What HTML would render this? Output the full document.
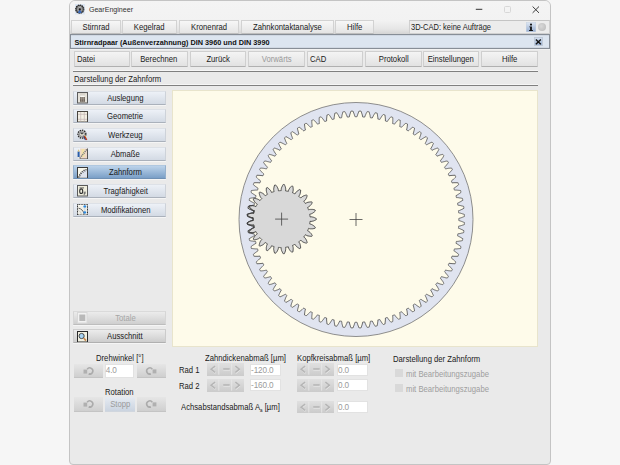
<!DOCTYPE html>
<html><head><meta charset="utf-8">
<style>
*{box-sizing:border-box;margin:0;padding:0}
html,body{width:620px;height:465px;overflow:hidden;background:#f6f6f6;font-family:"Liberation Sans",sans-serif;color:#222}
.a{position:absolute}
svg{display:block}
#win{position:absolute;left:69px;top:-0.2px;width:482px;height:464.7px;border:1px solid #c4c4c4;border-radius:6px 6px 4px 4px;background:#eaeaea;overflow:hidden}
#title{position:absolute;left:0;top:0;width:100%;height:34px;background:linear-gradient(#f4f4f4 0,#f2f2f2 20px,#e6e6e6 28px,#d0d0d0 34px)}
.tab{position:absolute;top:19.5px;height:14px;border:1px solid #d2d2d2;border-bottom-color:#bdbdbd;background:linear-gradient(#f7f7f7,#e4e4e4);font-size:8.6px;text-align:center;line-height:13.6px;color:#1a1a1a}
.btn{position:absolute;top:51px;height:15.5px;border:1px solid #cfcfcf;border-bottom-color:#b0b0b0;border-radius:1px;background:linear-gradient(#f4f4f4,#e2e2e2);font-size:8.6px;text-align:center;line-height:15.5px;color:#1a1a1a}
.btn.al{text-align:left;padding-left:2px}
.btn.dis{color:#999}
.sb{position:absolute;left:73px;width:92.5px;height:14px;border:1px solid #cdd2d9;border-top-color:#dde1e7;border-bottom-color:#aab1bb;box-shadow:0 1px 0 #f5f5f5;background:linear-gradient(#edf1f7,#d3dae4);font-size:8.6px;text-align:center;line-height:13.8px;color:#1a1a1a;padding-left:12px}
.sb.sel{background:linear-gradient(#bcd3ea,#7a9fc7);border-color:#b0c8e0 #95b0cc #6f90b4}
.ic{position:absolute;left:3.1px;top:0.4px}
.t{position:absolute;font-size:8.6px;white-space:nowrap;color:#1a1a1a;transform:scaleX(0.895);transform-origin:0 0;margin-top:-0.5px}
.t.n{transform:none;margin-top:0}
i{font-style:normal;display:inline-block;transform:scaleX(0.895)}
.al i{transform-origin:0 0}
.t.dis{color:#9e9e9e}
.t sub{font-size:5px;vertical-align:-2px}
.gb{position:absolute;width:29.3px;height:14.5px;border-bottom:1px solid #c4c4c4;background:linear-gradient(#e6e6e6,#cfcfcf);display:flex;align-items:center;justify-content:center}
.gb.stopp{background:linear-gradient(#e6ebf2,#cbd4e0);color:#9a9a9a;font-size:8.6px;border-color:#d0d6de}
.inp{position:absolute;background:#fff;border:1px solid #e2e2e2;font-size:8.2px;color:#9a9a9a;padding-left:0.1px;line-height:12.5px;padding-top:0px;letter-spacing:-0.15px}
.spin{position:absolute;width:37.2px;height:12.5px;background:linear-gradient(#e0e0e0,#cbcbcb)}
.cb{position:absolute;width:8px;height:7.5px;background:#d9d9d9}
</style></head><body>
<div id="win">
 <div id="title"></div>
</div>
<svg class="a" style="left:75px;top:4px" width="10" height="10.5"><rect width="10" height="10.5" fill="#dde6f2"/><circle cx="4.8" cy="5.2" r="4.1" fill="#5a5a5a" stroke="#262626" stroke-width="1.1" stroke-dasharray="1.3 0.8"/><circle cx="4.8" cy="5.2" r="2.7" fill="#9a9a9a"/><path d="M4.8,5.2L2.9,8.6Q4.8,9.6 6.7,8.6Z" fill="#3a6cc0"/><circle cx="4.8" cy="5.3" r="1.1" fill="#1a1a1a"/><path d="M3.4,2.3L4.8,3.4L6.2,2.3" stroke="#d0d0d0" stroke-width="0.7" fill="none"/></svg>
<div class="t n" style="left:88.9px;top:6.2px;font-size:7.1px;color:#333">GearEngineer</div>
<svg class="a" style="left:470px;top:0;" width="80" height="19">
 <path d="M5.8,9.3H12.3" stroke="#333" stroke-width="1"/>
 <rect x="34.5" y="6.5" width="6" height="6" rx="1" fill="none" stroke="#d4d4d4" stroke-width="0.9"/>
 <path d="M62.6,6.5L69,12.9M69,6.5L62.6,12.9" stroke="#333" stroke-width="0.95"/>
</svg>
<div class="tab" style="left:70.5px;width:50.5px"><i>Stirnrad</i></div><div class="tab" style="left:121.5px;width:55.5px"><i>Kegelrad</i></div><div class="tab" style="left:178.5px;width:60.5px"><i>Kronenrad</i></div><div class="tab" style="left:240.5px;width:93.0px"><i>Zahnkontaktanalyse</i></div><div class="tab" style="left:335px;width:39px"><i>Hilfe</i></div>
<div class="a" style="left:409px;top:20px;width:141px;height:14px;border:1px solid #d0d0d0;border-top-color:#c4c4c4;background:#ececec"></div>
<div class="t" style="left:411.4px;top:22.2px;font-size:8.4px">3D-CAD: keine Aufträge</div>
<svg class="a" style="left:525.5px;top:22px" width="10" height="10"><defs><linearGradient id="ig" x1="0" y1="0" x2="0" y2="1"><stop offset="0" stop-color="#e2eaf5"/><stop offset="1" stop-color="#93abcf"/></linearGradient></defs><rect x="0" y="0" width="10" height="10" fill="url(#ig)"/><rect x="0.25" y="0.25" width="9.5" height="9.5" fill="none" stroke="#c9d3e0" stroke-width="0.5"/><circle cx="5" cy="2.6" r="1.05" fill="#111"/><path d="M3.3,4.5H5.9V8.1H6.9V8.9H3.1V8.1H4.1V5.3H3.3Z" fill="#111"/></svg>
<div class="a" style="left:538px;top:22.5px;width:8px;height:8px;border-radius:4px;background:radial-gradient(circle at 40% 40%,#d8d8d8,#b8b8b8)"></div>
<div class="a" style="left:70px;top:34px;width:480px;height:15px;border:1px solid #878e97;background:#dce5f0;box-shadow:inset 0 0.6px 0 #c4ccd6,inset 0 -0.6px 0 #c4ccd6"></div><div class="a" style="left:70px;top:49px;width:480px;height:1px;background:#f2f2f2"></div>
<div class="t n" style="left:74.5px;top:37.9px;font-weight:bold;font-size:7.3px;color:#111">Stirnradpaar (Außenverzahnung) DIN 3960 und DIN 3990</div>
<div class="a" style="left:534px;top:36.5px;width:9px;height:9.5px;background:linear-gradient(#d2deee,#9ab1d2);border:0.5px solid #c0cad8"></div>
<svg class="a" style="left:534px;top:36.5px" width="10" height="10"><path d="M1.9,2.4L6.8,7.3M6.8,2.4L1.9,7.3" stroke="#141414" stroke-width="1.35"/></svg>
<div class="btn al" style="left:73.5px;width:56.5px"><i>Datei</i></div><div class="btn" style="left:131px;width:56.5px"><i>Berechnen</i></div><div class="btn" style="left:189.5px;width:56.5px"><i>Zurück</i></div><div class="btn dis" style="left:248px;width:56.5px"><i>Vorwärts</i></div><div class="btn al" style="left:306.5px;width:56.5px"><i>CAD</i></div><div class="btn" style="left:365px;width:56.5px"><i>Protokoll</i></div><div class="btn" style="left:422.5px;width:56.5px"><i>Einstellungen</i></div><div class="btn" style="left:481px;width:56.5px"><i>Hilfe</i></div>
<div class="a" style="left:73px;top:70px;width:465px;height:2px;border-top:1px solid #f6f6f6;border-bottom:1px solid #808080"></div>
<div class="t" style="left:73.5px;top:74.5px">Darstellung der Zahnform</div>
<div class="a" style="left:73px;top:84px;width:465px;height:2px;border-top:1px solid #f6f6f6;border-bottom:1px solid #808080"></div>
<div class="sb" style="top:90.7px"><svg class="ic" width="11" height="11.5"><rect x="0.5" y="0.5" width="10" height="10.5" fill="#d9d5cd" stroke="#5c5c5c"/><rect x="1.5" y="1.5" width="1" height="8.5" fill="#f4f2ea"/><rect x="8.5" y="1.5" width="1" height="8.5" fill="#f4f2ea"/><rect x="3" y="5" width="5" height="4.8" fill="#6e655c"/><rect x="3.3" y="3.6" width="4.4" height="1.6" fill="#fbfaf6"/><path d="M3.2,6.8H7.8M4.6,5.2V9.8M6.4,5.2V9.8" stroke="#b0a89e" stroke-width="0.6"/></svg><i>Auslegung</i></div><div class="sb" style="top:109.3px"><svg class="ic" width="11" height="11.5"><rect x="0.5" y="0.5" width="10" height="10.5" fill="#f3efe4" stroke="#4a4640"/><path d="M3.7,1V10.5M7.3,1V10.5M1,3.3H10M1,8.3H10" stroke="#c4b4b4" stroke-width="0.7"/></svg><i>Geometrie</i></div><div class="sb" style="top:127.9px"><svg class="ic" width="11" height="11.5"><circle cx="4.9" cy="5.2" r="4" fill="#bdbdbd" stroke="#2a2a2a" stroke-width="1.3" stroke-dasharray="1.4 0.9"/><circle cx="4.9" cy="5.2" r="2.6" fill="#8a8a8a"/><ellipse cx="4.9" cy="5.4" rx="1.9" ry="1.4" fill="#f0eee0"/><ellipse cx="4.9" cy="4.7" rx="1.2" ry="0.6" fill="#333"/><path d="M7.6,7L9.6,11" stroke="#c03818" stroke-width="1.6"/><path d="M6.6,7.5L8.4,11" stroke="#2a3e80" stroke-width="1"/><path d="M8.3,6.5L8.8,8" stroke="#d8c050" stroke-width="0.8"/></svg><i>Werkzeug</i></div><div class="sb" style="top:146.5px"><svg class="ic" width="11" height="11.5"><rect x="3" y="0.5" width="7.5" height="10.5" fill="#efd8c8"/><path d="M4.5,1H7.5V9H4.5Z" fill="#f2e4a0" opacity="0.8"/><path d="M10.5,0.5V11H2.5" fill="none" stroke="#444" stroke-width="0.9"/><path d="M2.8,10.2L10,1.2" stroke="#3a3a3a" stroke-width="1.3" stroke-dasharray="1.2 0.8"/><path d="M2.8,10.2L10,1.2" stroke="#eee" stroke-width="0.5"/><rect x="0.6" y="3.5" width="2" height="5.5" fill="#2a5ca8"/><path d="M0.6,3.5L1.6,1.2L2.6,3.5Z" fill="#d8c070"/><path d="M0.6,9.2L1.6,10.8L2.6,9.2Z" fill="#f4f0e0"/></svg><i>Abmaße</i></div><div class="sb sel" style="top:165.3px"><svg class="ic" width="11" height="11.5"><rect x="0.5" y="0.5" width="10" height="10.5" fill="#f8f7ec" stroke="#3a3a3a"/><path d="M1.8,10.5C2.6,6.5 5.5,3.2 10,2.6V10.5Z" fill="#dde2ec"/><path d="M1.8,10.5C2.6,6.5 5.5,3.2 10,2.6" fill="none" stroke="#505050" stroke-width="1.3" stroke-dasharray="1.3 0.8"/><path d="M2.6,8.2L3.6,8.8M4,6.2L5,7M5.6,4.6L6.4,5.6M7.4,3.6L8,4.6" stroke="#555" stroke-width="0.9"/></svg><i>Zahnform</i></div><div class="sb" style="top:183.9px"><svg class="ic" width="11" height="11.5"><rect x="0.5" y="0.5" width="10" height="10.5" fill="#efeede" stroke="#5a5a5a"/><path d="M2.5,2.9H7" stroke="#444" stroke-width="0.8"/><ellipse cx="4.2" cy="6.2" rx="1.5" ry="2.3" fill="none" stroke="#333" stroke-width="1.1"/><path d="M6.8,7.2H9M7.2,7.2V10.2M7.2,8.6H8.6" stroke="#555" stroke-width="0.8"/></svg><i>Tragfähigkeit</i></div><div class="sb" style="top:202.5px"><svg class="ic" width="11" height="11.5"><rect x="0.5" y="0.5" width="10" height="10.5" fill="#efeee6" stroke="#222" stroke-dasharray="1 0.6"/><path d="M1.2,1.5H9" stroke="#fbfaf2" stroke-width="1.4"/><path d="M1.5,4.2C4,4.6 6.5,6.5 7.3,10.5" fill="none" stroke="#5a5a5a" stroke-width="0.9"/><path d="M1.5,6.5C3,7 4,8.5 4.5,10.5" fill="none" stroke="#999" stroke-width="0.6" stroke-dasharray="0.8 0.6"/><ellipse cx="7.8" cy="2.4" rx="1.4" ry="1.2" fill="#2b88e0"/><ellipse cx="7.8" cy="8.4" rx="1.4" ry="1.2" fill="#2b88e0"/><path d="M7.8,3.4V7.4" stroke="#4a90d8" stroke-width="0.5" stroke-dasharray="0.6 0.5"/></svg><i>Modifikationen</i></div>
<div class="sb" style="top:310.5px;color:#a6a6a6;background:linear-gradient(#ececec,#cfcfcf);border-color:#dadada #d6d6d6 #bdbdbd"><svg class="ic" width="11" height="11.5" style="top:0.8px"><rect x="0.5" y="0.5" width="9.5" height="10.5" fill="#f2f2f2" stroke="#d8d8d8"/><rect x="2.3" y="2.5" width="6" height="6.5" fill="#b9b9b9"/></svg><i>Totale</i></div>
<div class="sb" style="top:329px;background:linear-gradient(#ececec,#cdcdcd);border-color:#cfcfcf #cbcbcb #b0b0b0"><svg class="ic" width="11" height="11.5" style="top:0.8px"><rect x="0.5" y="0.5" width="10" height="10.5" fill="#f2f1e2" stroke="#2a2a2a"/><circle cx="4.6" cy="5" r="2.6" fill="#a8d4f4" stroke="#3a3a3a" stroke-width="0.9"/><path d="M6.6,7L9,9.6" stroke="#c88a50" stroke-width="1.7"/></svg><i>Ausschnitt</i></div>
<svg class="a" style="left:172px;top:90px" width="366" height="257">
 <rect x="0.5" y="0.5" width="365" height="256" fill="#fefbea" stroke="#e8e4cc"/>
 <defs><clipPath id="mc"><ellipse cx="78" cy="129.5" rx="8" ry="15.5"/></clipPath></defs>
 <path d="M67.00,129.50A117.0,117.0 0 1 0 301.00,129.50A117.0,117.0 0 1 0 67.00,129.50ZM286.8,129.5L286.8,129.7L286.8,129.8L286.8,130.0L286.8,130.2L286.8,130.3L286.8,130.5L287.7,130.8L288.7,131.1L289.6,131.4L290.6,131.8L291.5,132.2L292.5,132.6L292.4,132.9L292.4,133.2L292.4,133.6L292.4,133.9L292.4,134.2L292.4,134.5L291.4,134.9L290.4,135.2L289.5,135.5L288.5,135.8L287.5,136.0L286.6,136.2L286.6,136.4L286.6,136.5L286.5,136.7L286.5,136.9L286.5,137.0L286.5,137.2L286.5,137.3L286.5,137.5L286.5,137.7L286.5,137.8L286.4,138.0L286.4,138.2L287.4,138.5L288.3,138.9L289.2,139.3L290.1,139.7L291.0,140.2L291.9,140.7L291.9,141.0L291.9,141.3L291.8,141.6L291.8,142.0L291.7,142.3L291.7,142.6L290.7,142.9L289.7,143.1L288.7,143.4L287.8,143.6L286.8,143.7L285.8,143.9L285.8,144.0L285.7,144.2L285.7,144.3L285.7,144.5L285.7,144.7L285.7,144.8L285.6,145.0L285.6,145.1L285.6,145.3L285.6,145.5L285.5,145.6L285.5,145.8L286.4,146.2L287.3,146.7L288.2,147.1L289.0,147.6L289.9,148.2L290.8,148.7L290.7,149.0L290.7,149.4L290.6,149.7L290.5,150.0L290.5,150.3L290.4,150.6L289.4,150.8L288.4,151.0L287.4,151.1L286.4,151.3L285.4,151.4L284.4,151.4L284.4,151.6L284.4,151.7L284.3,151.9L284.3,152.1L284.3,152.2L284.2,152.4L284.2,152.5L284.1,152.7L284.1,152.9L284.1,153.0L284.0,153.2L284.0,153.3L284.9,153.8L285.7,154.3L286.6,154.9L287.4,155.4L288.2,156.0L289.0,156.7L289.0,157.0L288.9,157.3L288.8,157.6L288.7,157.9L288.6,158.2L288.6,158.5L287.5,158.6L286.5,158.7L285.5,158.8L284.5,158.9L283.5,158.9L282.5,158.9L282.5,159.0L282.4,159.2L282.4,159.3L282.3,159.5L282.3,159.6L282.2,159.8L282.2,160.0L282.1,160.1L282.1,160.3L282.0,160.4L282.0,160.6L281.9,160.7L282.8,161.3L283.6,161.9L284.4,162.5L285.2,163.1L286.0,163.8L286.7,164.4L286.6,164.7L286.5,165.0L286.4,165.3L286.3,165.6L286.2,165.9L286.1,166.2L285.1,166.3L284.0,166.3L283.0,166.3L282.0,166.3L281.0,166.2L280.0,166.1L280.0,166.3L279.9,166.4L279.9,166.6L279.8,166.8L279.8,166.9L279.7,167.1L279.6,167.2L279.6,167.4L279.5,167.5L279.5,167.7L279.4,167.8L279.3,168.0L280.1,168.6L280.9,169.2L281.6,169.9L282.4,170.6L283.1,171.3L283.8,172.0L283.7,172.3L283.6,172.6L283.4,172.9L283.3,173.2L283.2,173.5L283.1,173.8L282.0,173.7L281.0,173.7L280.0,173.6L279.0,173.5L278.0,173.4L277.0,173.2L277.0,173.4L276.9,173.5L276.8,173.7L276.8,173.8L276.7,174.0L276.6,174.1L276.5,174.3L276.5,174.4L276.4,174.5L276.3,174.7L276.3,174.8L276.2,175.0L276.9,175.6L277.6,176.3L278.3,177.1L279.0,177.8L279.7,178.6L280.4,179.4L280.2,179.6L280.1,179.9L279.9,180.2L279.8,180.5L279.6,180.8L279.5,181.0L278.5,180.9L277.4,180.8L276.4,180.7L275.4,180.5L274.5,180.3L273.5,180.1L273.4,180.2L273.4,180.3L273.3,180.5L273.2,180.6L273.1,180.8L273.0,180.9L272.9,181.0L272.9,181.2L272.8,181.3L272.7,181.5L272.6,181.6L272.5,181.7L273.2,182.5L273.9,183.2L274.5,184.0L275.2,184.8L275.8,185.6L276.4,186.4L276.2,186.7L276.0,187.0L275.9,187.2L275.7,187.5L275.5,187.8L275.4,188.0L274.3,187.9L273.3,187.7L272.4,187.4L271.4,187.2L270.4,186.9L269.5,186.6L269.4,186.7L269.3,186.9L269.2,187.0L269.1,187.1L269.0,187.3L268.9,187.4L268.8,187.5L268.8,187.7L268.7,187.8L268.6,187.9L268.5,188.1L268.4,188.2L269.0,189.0L269.6,189.8L270.2,190.6L270.8,191.4L271.3,192.3L271.9,193.2L271.7,193.4L271.5,193.7L271.3,193.9L271.1,194.2L270.9,194.4L270.7,194.7L269.7,194.4L268.7,194.2L267.8,193.9L266.8,193.5L265.9,193.2L265.0,192.8L264.9,193.0L264.8,193.1L264.7,193.2L264.6,193.3L264.5,193.5L264.4,193.6L264.3,193.7L264.2,193.8L264.1,194.0L264.0,194.1L263.9,194.2L263.8,194.4L264.3,195.2L264.9,196.0L265.4,196.9L265.9,197.7L266.4,198.6L266.9,199.6L266.7,199.8L266.4,200.0L266.2,200.3L266.0,200.5L265.8,200.8L265.6,201.0L264.6,200.7L263.7,200.3L262.7,200.0L261.8,199.6L260.9,199.1L260.0,198.7L259.9,198.8L259.8,198.9L259.7,199.1L259.6,199.2L259.5,199.3L259.4,199.4L259.2,199.5L259.1,199.7L259.0,199.8L258.9,199.9L258.8,200.0L258.7,200.1L259.2,201.0L259.7,201.9L260.1,202.7L260.6,203.7L261.0,204.6L261.4,205.5L261.2,205.8L260.9,206.0L260.7,206.2L260.5,206.4L260.3,206.7L260.0,206.9L259.1,206.5L258.2,206.1L257.2,205.6L256.4,205.2L255.5,204.7L254.6,204.2L254.5,204.3L254.4,204.4L254.3,204.5L254.2,204.6L254.0,204.7L253.9,204.9L253.8,205.0L253.7,205.1L253.6,205.2L253.4,205.3L253.3,205.4L253.2,205.5L253.6,206.4L254.1,207.3L254.5,208.2L254.8,209.2L255.2,210.1L255.5,211.1L255.3,211.3L255.0,211.5L254.8,211.7L254.5,211.9L254.3,212.2L254.1,212.4L253.1,211.9L252.2,211.4L251.4,210.9L250.5,210.4L249.7,209.8L248.9,209.3L248.7,209.4L248.6,209.5L248.5,209.6L248.3,209.7L248.2,209.8L248.1,209.9L248.0,210.0L247.8,210.1L247.7,210.2L247.6,210.3L247.5,210.4L247.3,210.5L247.7,211.4L248.0,212.3L248.4,213.3L248.7,214.2L248.9,215.2L249.2,216.2L248.9,216.4L248.7,216.6L248.4,216.8L248.2,217.0L247.9,217.2L247.7,217.4L246.8,216.8L245.9,216.3L245.1,215.7L244.3,215.1L243.5,214.5L242.7,213.9L242.6,214.0L242.4,214.1L242.3,214.2L242.2,214.3L242.0,214.3L241.9,214.4L241.8,214.5L241.6,214.6L241.5,214.7L241.4,214.8L241.2,214.9L241.1,215.0L241.4,215.9L241.7,216.9L241.9,217.9L242.2,218.8L242.4,219.8L242.5,220.9L242.3,221.0L242.0,221.2L241.7,221.4L241.5,221.5L241.2,221.7L240.9,221.9L240.1,221.3L239.3,220.7L238.5,220.0L237.7,219.4L237.0,218.7L236.2,218.0L236.1,218.1L236.0,218.2L235.8,218.3L235.7,218.4L235.5,218.4L235.4,218.5L235.3,218.6L235.1,218.7L235.0,218.8L234.8,218.9L234.7,218.9L234.6,219.0L234.8,220.0L235.0,220.9L235.2,221.9L235.3,222.9L235.4,224.0L235.5,225.0L235.3,225.1L235.0,225.3L234.7,225.4L234.4,225.6L234.1,225.7L233.9,225.9L233.1,225.2L232.3,224.5L231.6,223.8L230.8,223.1L230.1,222.4L229.5,221.7L229.3,221.8L229.2,221.8L229.0,221.9L228.9,222.0L228.8,222.0L228.6,222.1L228.5,222.2L228.3,222.3L228.2,222.3L228.0,222.4L227.9,222.5L227.7,222.5L227.9,223.5L228.0,224.5L228.1,225.5L228.2,226.5L228.2,227.5L228.3,228.6L228.0,228.7L227.7,228.8L227.4,228.9L227.1,229.1L226.8,229.2L226.5,229.3L225.8,228.6L225.1,227.9L224.4,227.1L223.7,226.4L223.1,225.6L222.5,224.8L222.3,224.9L222.2,225.0L222.0,225.0L221.9,225.1L221.7,225.1L221.6,225.2L221.4,225.3L221.3,225.3L221.1,225.4L220.9,225.4L220.8,225.5L220.6,225.5L220.7,226.5L220.8,227.5L220.8,228.5L220.8,229.5L220.8,230.6L220.7,231.6L220.4,231.7L220.1,231.8L219.8,231.9L219.5,232.0L219.2,232.1L218.9,232.2L218.3,231.5L217.6,230.7L217.0,229.9L216.4,229.1L215.8,228.3L215.2,227.4L215.1,227.5L214.9,227.5L214.8,227.6L214.6,227.6L214.5,227.7L214.3,227.7L214.1,227.8L214.0,227.8L213.8,227.9L213.7,227.9L213.5,228.0L213.4,228.0L213.4,229.0L213.4,230.0L213.3,231.0L213.2,232.0L213.1,233.0L213.0,234.1L212.7,234.1L212.4,234.2L212.1,234.3L211.8,234.4L211.5,234.5L211.2,234.5L210.5,233.7L209.9,232.9L209.4,232.1L208.8,231.2L208.3,230.4L207.8,229.5L207.7,229.5L207.5,229.6L207.4,229.6L207.2,229.6L207.0,229.7L206.9,229.7L206.7,229.8L206.6,229.8L206.4,229.8L206.2,229.9L206.1,229.9L205.9,229.9L205.9,230.9L205.8,231.9L205.6,232.9L205.5,233.9L205.3,234.9L205.1,235.9L204.8,236.0L204.5,236.0L204.2,236.1L203.9,236.2L203.5,236.2L203.2,236.3L202.7,235.4L202.1,234.5L201.6,233.7L201.2,232.8L200.7,231.9L200.3,231.0L200.1,231.0L200.0,231.1L199.8,231.1L199.6,231.1L199.5,231.1L199.3,231.2L199.2,231.2L199.0,231.2L198.8,231.2L198.7,231.2L198.5,231.3L198.4,231.3L198.2,232.3L198.1,233.3L197.9,234.2L197.6,235.2L197.4,236.2L197.1,237.2L196.8,237.2L196.5,237.3L196.1,237.3L195.8,237.4L195.5,237.4L195.2,237.4L194.7,236.5L194.2,235.6L193.8,234.7L193.4,233.8L193.0,232.9L192.7,231.9L192.5,231.9L192.3,232.0L192.2,232.0L192.0,232.0L191.8,232.0L191.7,232.0L191.5,232.0L191.4,232.0L191.2,232.0L191.0,232.1L190.9,232.1L190.7,232.1L190.5,233.0L190.3,234.0L190.0,235.0L189.7,235.9L189.4,236.9L189.0,237.9L188.7,237.9L188.4,237.9L188.1,237.9L187.7,237.9L187.4,237.9L187.1,238.0L186.7,237.0L186.3,236.1L185.9,235.1L185.6,234.2L185.3,233.2L185.0,232.3L184.8,232.3L184.7,232.3L184.5,232.3L184.3,232.3L184.2,232.3L184.0,232.3L183.8,232.3L183.7,232.3L183.5,232.3L183.3,232.3L183.2,232.3L183.0,232.3L182.7,233.2L182.4,234.2L182.1,235.1L181.7,236.1L181.3,237.0L180.9,238.0L180.6,237.9L180.3,237.9L179.9,237.9L179.6,237.9L179.3,237.9L179.0,237.9L178.6,236.9L178.3,235.9L178.0,235.0L177.7,234.0L177.5,233.0L177.3,232.1L177.1,232.1L177.0,232.1L176.8,232.0L176.6,232.0L176.5,232.0L176.3,232.0L176.2,232.0L176.0,232.0L175.8,232.0L175.7,232.0L175.5,231.9L175.3,231.9L175.0,232.9L174.6,233.8L174.2,234.7L173.8,235.6L173.3,236.5L172.8,237.4L172.5,237.4L172.2,237.4L171.9,237.3L171.5,237.3L171.2,237.2L170.9,237.2L170.6,236.2L170.4,235.2L170.1,234.2L169.9,233.3L169.8,232.3L169.6,231.3L169.5,231.3L169.3,231.2L169.2,231.2L169.0,231.2L168.8,231.2L168.7,231.2L168.5,231.1L168.4,231.1L168.2,231.1L168.0,231.1L167.9,231.0L167.7,231.0L167.3,231.9L166.8,232.8L166.4,233.7L165.9,234.5L165.3,235.4L164.8,236.3L164.5,236.2L164.1,236.2L163.8,236.1L163.5,236.0L163.2,236.0L162.9,235.9L162.7,234.9L162.5,233.9L162.4,232.9L162.2,231.9L162.1,230.9L162.1,229.9L161.9,229.9L161.8,229.9L161.6,229.8L161.4,229.8L161.3,229.8L161.1,229.7L161.0,229.7L160.8,229.6L160.6,229.6L160.5,229.6L160.3,229.5L160.2,229.5L159.7,230.4L159.2,231.2L158.6,232.1L158.1,232.9L157.5,233.7L156.8,234.5L156.5,234.5L156.2,234.4L155.9,234.3L155.6,234.2L155.3,234.1L155.0,234.1L154.9,233.0L154.8,232.0L154.7,231.0L154.6,230.0L154.6,229.0L154.6,228.0L154.5,228.0L154.3,227.9L154.2,227.9L154.0,227.8L153.9,227.8L153.7,227.7L153.5,227.7L153.4,227.6L153.2,227.6L153.1,227.5L152.9,227.5L152.8,227.4L152.2,228.3L151.6,229.1L151.0,229.9L150.4,230.7L149.7,231.5L149.1,232.2L148.8,232.1L148.5,232.0L148.2,231.9L147.9,231.8L147.6,231.7L147.3,231.6L147.2,230.6L147.2,229.5L147.2,228.5L147.2,227.5L147.3,226.5L147.4,225.5L147.2,225.5L147.1,225.4L146.9,225.4L146.7,225.3L146.6,225.3L146.4,225.2L146.3,225.1L146.1,225.1L146.0,225.0L145.8,225.0L145.7,224.9L145.5,224.8L144.9,225.6L144.3,226.4L143.6,227.1L142.9,227.9L142.2,228.6L141.5,229.3L141.2,229.2L140.9,229.1L140.6,228.9L140.3,228.8L140.0,228.7L139.7,228.6L139.8,227.5L139.8,226.5L139.9,225.5L140.0,224.5L140.1,223.5L140.3,222.5L140.1,222.5L140.0,222.4L139.8,222.3L139.7,222.3L139.5,222.2L139.4,222.1L139.2,222.0L139.1,222.0L139.0,221.9L138.8,221.8L138.7,221.8L138.5,221.7L137.9,222.4L137.2,223.1L136.4,223.8L135.7,224.5L134.9,225.2L134.1,225.9L133.9,225.7L133.6,225.6L133.3,225.4L133.0,225.3L132.7,225.1L132.5,225.0L132.6,224.0L132.7,222.9L132.8,221.9L133.0,220.9L133.2,220.0L133.4,219.0L133.3,218.9L133.2,218.9L133.0,218.8L132.9,218.7L132.7,218.6L132.6,218.5L132.5,218.4L132.3,218.4L132.2,218.3L132.0,218.2L131.9,218.1L131.8,218.0L131.0,218.7L130.3,219.4L129.5,220.0L128.7,220.7L127.9,221.3L127.1,221.9L126.8,221.7L126.5,221.5L126.3,221.4L126.0,221.2L125.7,221.0L125.5,220.9L125.6,219.8L125.8,218.8L126.1,217.9L126.3,216.9L126.6,215.9L126.9,215.0L126.8,214.9L126.6,214.8L126.5,214.7L126.4,214.6L126.2,214.5L126.1,214.4L126.0,214.3L125.8,214.3L125.7,214.2L125.6,214.1L125.4,214.0L125.3,213.9L124.5,214.5L123.7,215.1L122.9,215.7L122.1,216.3L121.2,216.8L120.3,217.4L120.1,217.2L119.8,217.0L119.6,216.8L119.3,216.6L119.1,216.4L118.8,216.2L119.1,215.2L119.3,214.2L119.6,213.3L120.0,212.3L120.3,211.4L120.7,210.5L120.5,210.4L120.4,210.3L120.3,210.2L120.2,210.1L120.0,210.0L119.9,209.9L119.8,209.8L119.7,209.7L119.5,209.6L119.4,209.5L119.3,209.4L119.1,209.3L118.3,209.8L117.5,210.4L116.6,210.9L115.8,211.4L114.9,211.9L113.9,212.4L113.7,212.2L113.5,211.9L113.2,211.7L113.0,211.5L112.7,211.3L112.5,211.1L112.8,210.1L113.2,209.2L113.5,208.2L113.9,207.3L114.4,206.4L114.8,205.5L114.7,205.4L114.6,205.3L114.4,205.2L114.3,205.1L114.2,205.0L114.1,204.9L114.0,204.7L113.8,204.6L113.7,204.5L113.6,204.4L113.5,204.3L113.4,204.2L112.5,204.7L111.6,205.2L110.8,205.6L109.8,206.1L108.9,206.5L108.0,206.9L107.7,206.7L107.5,206.4L107.3,206.2L107.1,206.0L106.8,205.8L106.6,205.5L107.0,204.6L107.4,203.7L107.9,202.7L108.3,201.9L108.8,201.0L109.3,200.1L109.2,200.0L109.1,199.9L109.0,199.8L108.9,199.7L108.8,199.5L108.6,199.4L108.5,199.3L108.4,199.2L108.3,199.1L108.2,198.9L108.1,198.8L108.0,198.7L107.1,199.1L106.2,199.6L105.3,200.0L104.3,200.3L103.4,200.7L102.4,201.0L102.2,200.8L102.0,200.5L101.8,200.3L101.6,200.0L101.3,199.8L101.1,199.6L101.6,198.6L102.1,197.7L102.6,196.9L103.1,196.0L103.7,195.2L104.2,194.4L104.1,194.2L104.0,194.1L103.9,194.0L103.8,193.8L103.7,193.7L103.6,193.6L103.5,193.5L103.4,193.3L103.3,193.2L103.2,193.1L103.1,193.0L103.0,192.8L102.1,193.2L101.2,193.5L100.2,193.9L99.3,194.2L98.3,194.4L97.3,194.7L97.1,194.4L96.9,194.2L96.7,193.9L96.5,193.7L96.3,193.4L96.1,193.2L96.7,192.3L97.2,191.4L97.8,190.6L98.4,189.8L99.0,189.0L99.6,188.2L99.5,188.1L99.4,187.9L99.3,187.8L99.2,187.7L99.2,187.5L99.1,187.4L99.0,187.3L98.9,187.1L98.8,187.0L98.7,186.9L98.6,186.7L98.5,186.6L97.6,186.9L96.6,187.2L95.6,187.4L94.7,187.7L93.7,187.9L92.6,188.0L92.5,187.8L92.3,187.5L92.1,187.2L92.0,187.0L91.8,186.7L91.6,186.4L92.2,185.6L92.8,184.8L93.5,184.0L94.1,183.2L94.8,182.5L95.5,181.7L95.4,181.6L95.3,181.5L95.2,181.3L95.1,181.2L95.1,181.0L95.0,180.9L94.9,180.8L94.8,180.6L94.7,180.5L94.6,180.3L94.6,180.2L94.5,180.1L93.5,180.3L92.6,180.5L91.6,180.7L90.6,180.8L89.5,180.9L88.5,181.0L88.4,180.8L88.2,180.5L88.1,180.2L87.9,179.9L87.8,179.6L87.6,179.4L88.3,178.6L89.0,177.8L89.7,177.1L90.4,176.3L91.1,175.6L91.8,175.0L91.7,174.8L91.7,174.7L91.6,174.5L91.5,174.4L91.5,174.3L91.4,174.1L91.3,174.0L91.2,173.8L91.2,173.7L91.1,173.5L91.0,173.4L91.0,173.2L90.0,173.4L89.0,173.5L88.0,173.6L87.0,173.7L86.0,173.7L84.9,173.8L84.8,173.5L84.7,173.2L84.6,172.9L84.4,172.6L84.3,172.3L84.2,172.0L84.9,171.3L85.6,170.6L86.4,169.9L87.1,169.2L87.9,168.6L88.7,168.0L88.6,167.8L88.5,167.7L88.5,167.5L88.4,167.4L88.4,167.2L88.3,167.1L88.2,166.9L88.2,166.8L88.1,166.6L88.1,166.4L88.0,166.3L88.0,166.1L87.0,166.2L86.0,166.3L85.0,166.3L84.0,166.3L82.9,166.3L81.9,166.2L81.8,165.9L81.7,165.6L81.6,165.3L81.5,165.0L81.4,164.7L81.3,164.4L82.0,163.8L82.8,163.1L83.6,162.5L84.4,161.9L85.2,161.3L86.1,160.7L86.0,160.6L86.0,160.4L85.9,160.3L85.9,160.1L85.8,160.0L85.8,159.8L85.7,159.6L85.7,159.5L85.6,159.3L85.6,159.2L85.5,159.0L85.5,158.9L84.5,158.9L83.5,158.9L82.5,158.8L81.5,158.7L80.5,158.6L79.4,158.5L79.4,158.2L79.3,157.9L79.2,157.6L79.1,157.3L79.0,157.0L79.0,156.7L79.8,156.0L80.6,155.4L81.4,154.9L82.3,154.3L83.1,153.8L84.0,153.3L84.0,153.2L83.9,153.0L83.9,152.9L83.9,152.7L83.8,152.5L83.8,152.4L83.7,152.2L83.7,152.1L83.7,151.9L83.6,151.7L83.6,151.6L83.6,151.4L82.6,151.4L81.6,151.3L80.6,151.1L79.6,151.0L78.6,150.8L77.6,150.6L77.5,150.3L77.5,150.0L77.4,149.7L77.3,149.4L77.3,149.0L77.2,148.7L78.1,148.2L79.0,147.6L79.8,147.1L80.7,146.7L81.6,146.2L82.5,145.8L82.5,145.6L82.4,145.5L82.4,145.3L82.4,145.1L82.4,145.0L82.3,144.8L82.3,144.7L82.3,144.5L82.3,144.3L82.3,144.2L82.2,144.0L82.2,143.9L81.2,143.7L80.2,143.6L79.3,143.4L78.3,143.1L77.3,142.9L76.3,142.6L76.3,142.3L76.2,142.0L76.2,141.6L76.1,141.3L76.1,141.0L76.1,140.7L77.0,140.2L77.9,139.7L78.8,139.3L79.7,138.9L80.6,138.5L81.6,138.2L81.6,138.0L81.5,137.8L81.5,137.7L81.5,137.5L81.5,137.3L81.5,137.2L81.5,137.0L81.5,136.9L81.5,136.7L81.4,136.5L81.4,136.4L81.4,136.2L80.5,136.0L79.5,135.8L78.5,135.5L77.6,135.2L76.6,134.9L75.6,134.5L75.6,134.2L75.6,133.9L75.6,133.6L75.6,133.2L75.6,132.9L75.5,132.6L76.5,132.2L77.4,131.8L78.4,131.4L79.3,131.1L80.3,130.8L81.2,130.5L81.2,130.3L81.2,130.2L81.2,130.0L81.2,129.8L81.2,129.7L81.2,129.5L81.2,129.3L81.2,129.2L81.2,129.0L81.2,128.8L81.2,128.7L81.2,128.5L80.3,128.2L79.3,127.9L78.4,127.6L77.4,127.2L76.5,126.8L75.5,126.4L75.6,126.1L75.6,125.8L75.6,125.4L75.6,125.1L75.6,124.8L75.6,124.5L76.6,124.1L77.6,123.8L78.5,123.5L79.5,123.2L80.5,123.0L81.4,122.8L81.4,122.6L81.4,122.5L81.5,122.3L81.5,122.1L81.5,122.0L81.5,121.8L81.5,121.7L81.5,121.5L81.5,121.3L81.5,121.2L81.6,121.0L81.6,120.8L80.6,120.5L79.7,120.1L78.8,119.7L77.9,119.3L77.0,118.8L76.1,118.3L76.1,118.0L76.1,117.7L76.2,117.4L76.2,117.0L76.3,116.7L76.3,116.4L77.3,116.1L78.3,115.9L79.3,115.6L80.2,115.4L81.2,115.3L82.2,115.1L82.2,115.0L82.3,114.8L82.3,114.7L82.3,114.5L82.3,114.3L82.3,114.2L82.4,114.0L82.4,113.9L82.4,113.7L82.4,113.5L82.5,113.4L82.5,113.2L81.6,112.8L80.7,112.3L79.8,111.9L79.0,111.4L78.1,110.8L77.2,110.3L77.3,110.0L77.3,109.6L77.4,109.3L77.5,109.0L77.5,108.7L77.6,108.4L78.6,108.2L79.6,108.0L80.6,107.9L81.6,107.7L82.6,107.6L83.6,107.6L83.6,107.4L83.6,107.3L83.7,107.1L83.7,106.9L83.7,106.8L83.8,106.6L83.8,106.5L83.9,106.3L83.9,106.1L83.9,106.0L84.0,105.8L84.0,105.7L83.1,105.2L82.3,104.7L81.4,104.1L80.6,103.6L79.8,103.0L79.0,102.3L79.0,102.0L79.1,101.7L79.2,101.4L79.3,101.1L79.4,100.8L79.4,100.5L80.5,100.4L81.5,100.3L82.5,100.2L83.5,100.1L84.5,100.1L85.5,100.1L85.5,100.0L85.6,99.8L85.6,99.7L85.7,99.5L85.7,99.4L85.8,99.2L85.8,99.0L85.9,98.9L85.9,98.7L86.0,98.6L86.0,98.4L86.1,98.3L85.2,97.7L84.4,97.1L83.6,96.5L82.8,95.9L82.0,95.2L81.3,94.6L81.4,94.3L81.5,94.0L81.6,93.7L81.7,93.4L81.8,93.1L81.9,92.8L82.9,92.7L84.0,92.7L85.0,92.7L86.0,92.7L87.0,92.8L88.0,92.9L88.0,92.7L88.1,92.6L88.1,92.4L88.2,92.2L88.2,92.1L88.3,91.9L88.4,91.8L88.4,91.6L88.5,91.5L88.5,91.3L88.6,91.2L88.7,91.0L87.9,90.4L87.1,89.8L86.4,89.1L85.6,88.4L84.9,87.7L84.2,87.0L84.3,86.7L84.4,86.4L84.6,86.1L84.7,85.8L84.8,85.5L84.9,85.2L86.0,85.3L87.0,85.3L88.0,85.4L89.0,85.5L90.0,85.6L91.0,85.8L91.0,85.6L91.1,85.5L91.2,85.3L91.2,85.2L91.3,85.0L91.4,84.9L91.5,84.7L91.5,84.6L91.6,84.5L91.7,84.3L91.7,84.2L91.8,84.0L91.1,83.4L90.4,82.7L89.7,81.9L89.0,81.2L88.3,80.4L87.6,79.6L87.8,79.4L87.9,79.1L88.1,78.8L88.2,78.5L88.4,78.2L88.5,78.0L89.5,78.1L90.6,78.2L91.6,78.3L92.6,78.5L93.5,78.7L94.5,78.9L94.6,78.8L94.6,78.7L94.7,78.5L94.8,78.4L94.9,78.2L95.0,78.1L95.1,78.0L95.1,77.8L95.2,77.7L95.3,77.5L95.4,77.4L95.5,77.3L94.8,76.5L94.1,75.8L93.5,75.0L92.8,74.2L92.2,73.4L91.6,72.6L91.8,72.3L92.0,72.0L92.1,71.8L92.3,71.5L92.5,71.2L92.6,71.0L93.7,71.1L94.7,71.3L95.6,71.6L96.6,71.8L97.6,72.1L98.5,72.4L98.6,72.3L98.7,72.1L98.8,72.0L98.9,71.9L99.0,71.7L99.1,71.6L99.2,71.5L99.2,71.3L99.3,71.2L99.4,71.1L99.5,70.9L99.6,70.8L99.0,70.0L98.4,69.2L97.8,68.4L97.2,67.6L96.7,66.7L96.1,65.8L96.3,65.6L96.5,65.3L96.7,65.1L96.9,64.8L97.1,64.6L97.3,64.3L98.3,64.6L99.3,64.8L100.2,65.1L101.2,65.5L102.1,65.8L103.0,66.2L103.1,66.0L103.2,65.9L103.3,65.8L103.4,65.7L103.5,65.5L103.6,65.4L103.7,65.3L103.8,65.2L103.9,65.0L104.0,64.9L104.1,64.8L104.2,64.6L103.7,63.8L103.1,63.0L102.6,62.1L102.1,61.3L101.6,60.4L101.1,59.4L101.3,59.2L101.6,59.0L101.8,58.7L102.0,58.5L102.2,58.2L102.4,58.0L103.4,58.3L104.3,58.7L105.3,59.0L106.2,59.4L107.1,59.9L108.0,60.3L108.1,60.2L108.2,60.1L108.3,59.9L108.4,59.8L108.5,59.7L108.6,59.6L108.8,59.5L108.9,59.3L109.0,59.2L109.1,59.1L109.2,59.0L109.3,58.9L108.8,58.0L108.3,57.1L107.9,56.3L107.4,55.3L107.0,54.4L106.6,53.5L106.8,53.2L107.1,53.0L107.3,52.8L107.5,52.6L107.7,52.3L108.0,52.1L108.9,52.5L109.8,52.9L110.8,53.4L111.6,53.8L112.5,54.3L113.4,54.8L113.5,54.7L113.6,54.6L113.7,54.5L113.8,54.4L114.0,54.3L114.1,54.1L114.2,54.0L114.3,53.9L114.4,53.8L114.6,53.7L114.7,53.6L114.8,53.5L114.4,52.6L113.9,51.7L113.5,50.8L113.2,49.8L112.8,48.9L112.5,47.9L112.7,47.7L113.0,47.5L113.2,47.3L113.5,47.1L113.7,46.8L113.9,46.6L114.9,47.1L115.8,47.6L116.6,48.1L117.5,48.6L118.3,49.2L119.1,49.7L119.3,49.6L119.4,49.5L119.5,49.4L119.7,49.3L119.8,49.2L119.9,49.1L120.0,49.0L120.2,48.9L120.3,48.8L120.4,48.7L120.5,48.6L120.7,48.5L120.3,47.6L120.0,46.7L119.6,45.7L119.3,44.8L119.1,43.8L118.8,42.8L119.1,42.6L119.3,42.4L119.6,42.2L119.8,42.0L120.1,41.8L120.3,41.6L121.2,42.2L122.1,42.7L122.9,43.3L123.7,43.9L124.5,44.5L125.3,45.1L125.4,45.0L125.6,44.9L125.7,44.8L125.8,44.7L126.0,44.7L126.1,44.6L126.2,44.5L126.4,44.4L126.5,44.3L126.6,44.2L126.8,44.1L126.9,44.0L126.6,43.1L126.3,42.1L126.1,41.1L125.8,40.2L125.6,39.2L125.5,38.1L125.7,38.0L126.0,37.8L126.3,37.6L126.5,37.5L126.8,37.3L127.1,37.1L127.9,37.7L128.7,38.3L129.5,39.0L130.3,39.6L131.0,40.3L131.8,41.0L131.9,40.9L132.0,40.8L132.2,40.7L132.3,40.6L132.5,40.6L132.6,40.5L132.7,40.4L132.9,40.3L133.0,40.2L133.2,40.1L133.3,40.1L133.4,40.0L133.2,39.0L133.0,38.1L132.8,37.1L132.7,36.1L132.6,35.0L132.5,34.0L132.7,33.9L133.0,33.7L133.3,33.6L133.6,33.4L133.9,33.3L134.1,33.1L134.9,33.8L135.7,34.5L136.4,35.2L137.2,35.9L137.9,36.6L138.5,37.3L138.7,37.2L138.8,37.2L139.0,37.1L139.1,37.0L139.2,37.0L139.4,36.9L139.5,36.8L139.7,36.7L139.8,36.7L140.0,36.6L140.1,36.5L140.3,36.5L140.1,35.5L140.0,34.5L139.9,33.5L139.8,32.5L139.8,31.5L139.7,30.4L140.0,30.3L140.3,30.2L140.6,30.1L140.9,29.9L141.2,29.8L141.5,29.7L142.2,30.4L142.9,31.1L143.6,31.9L144.3,32.6L144.9,33.4L145.5,34.2L145.7,34.1L145.8,34.0L146.0,34.0L146.1,33.9L146.3,33.9L146.4,33.8L146.6,33.7L146.7,33.7L146.9,33.6L147.1,33.6L147.2,33.5L147.4,33.5L147.3,32.5L147.2,31.5L147.2,30.5L147.2,29.5L147.2,28.4L147.3,27.4L147.6,27.3L147.9,27.2L148.2,27.1L148.5,27.0L148.8,26.9L149.1,26.8L149.7,27.5L150.4,28.3L151.0,29.1L151.6,29.9L152.2,30.7L152.8,31.6L152.9,31.5L153.1,31.5L153.2,31.4L153.4,31.4L153.5,31.3L153.7,31.3L153.9,31.2L154.0,31.2L154.2,31.1L154.3,31.1L154.5,31.0L154.6,31.0L154.6,30.0L154.6,29.0L154.7,28.0L154.8,27.0L154.9,26.0L155.0,24.9L155.3,24.9L155.6,24.8L155.9,24.7L156.2,24.6L156.5,24.5L156.8,24.5L157.5,25.3L158.1,26.1L158.6,26.9L159.2,27.8L159.7,28.6L160.2,29.5L160.3,29.5L160.5,29.4L160.6,29.4L160.8,29.4L161.0,29.3L161.1,29.3L161.3,29.2L161.4,29.2L161.6,29.2L161.8,29.1L161.9,29.1L162.1,29.1L162.1,28.1L162.2,27.1L162.4,26.1L162.5,25.1L162.7,24.1L162.9,23.1L163.2,23.0L163.5,23.0L163.8,22.9L164.1,22.8L164.5,22.8L164.8,22.7L165.3,23.6L165.9,24.5L166.4,25.3L166.8,26.2L167.3,27.1L167.7,28.0L167.9,28.0L168.0,27.9L168.2,27.9L168.4,27.9L168.5,27.9L168.7,27.8L168.8,27.8L169.0,27.8L169.2,27.8L169.3,27.8L169.5,27.7L169.6,27.7L169.8,26.7L169.9,25.7L170.1,24.8L170.4,23.8L170.6,22.8L170.9,21.8L171.2,21.8L171.5,21.7L171.9,21.7L172.2,21.6L172.5,21.6L172.8,21.6L173.3,22.5L173.8,23.4L174.2,24.3L174.6,25.2L175.0,26.1L175.3,27.1L175.5,27.1L175.7,27.0L175.8,27.0L176.0,27.0L176.2,27.0L176.3,27.0L176.5,27.0L176.6,27.0L176.8,27.0L177.0,26.9L177.1,26.9L177.3,26.9L177.5,26.0L177.7,25.0L178.0,24.0L178.3,23.1L178.6,22.1L179.0,21.1L179.3,21.1L179.6,21.1L179.9,21.1L180.3,21.1L180.6,21.1L180.9,21.0L181.3,22.0L181.7,22.9L182.1,23.9L182.4,24.8L182.7,25.8L183.0,26.7L183.2,26.7L183.3,26.7L183.5,26.7L183.7,26.7L183.8,26.7L184.0,26.7L184.2,26.7L184.3,26.7L184.5,26.7L184.7,26.7L184.8,26.7L185.0,26.7L185.3,25.8L185.6,24.8L185.9,23.9L186.3,22.9L186.7,22.0L187.1,21.0L187.4,21.1L187.7,21.1L188.1,21.1L188.4,21.1L188.7,21.1L189.0,21.1L189.4,22.1L189.7,23.1L190.0,24.0L190.3,25.0L190.5,26.0L190.7,26.9L190.9,26.9L191.0,26.9L191.2,27.0L191.4,27.0L191.5,27.0L191.7,27.0L191.8,27.0L192.0,27.0L192.2,27.0L192.3,27.0L192.5,27.1L192.7,27.1L193.0,26.1L193.4,25.2L193.8,24.3L194.2,23.4L194.7,22.5L195.2,21.6L195.5,21.6L195.8,21.6L196.1,21.7L196.5,21.7L196.8,21.8L197.1,21.8L197.4,22.8L197.6,23.8L197.9,24.8L198.1,25.7L198.2,26.7L198.4,27.7L198.5,27.7L198.7,27.8L198.8,27.8L199.0,27.8L199.2,27.8L199.3,27.8L199.5,27.9L199.6,27.9L199.8,27.9L200.0,27.9L200.1,28.0L200.3,28.0L200.7,27.1L201.2,26.2L201.6,25.3L202.1,24.5L202.7,23.6L203.2,22.7L203.5,22.8L203.9,22.8L204.2,22.9L204.5,23.0L204.8,23.0L205.1,23.1L205.3,24.1L205.5,25.1L205.6,26.1L205.8,27.1L205.9,28.1L205.9,29.1L206.1,29.1L206.2,29.1L206.4,29.2L206.6,29.2L206.7,29.2L206.9,29.3L207.0,29.3L207.2,29.4L207.4,29.4L207.5,29.4L207.7,29.5L207.8,29.5L208.3,28.6L208.8,27.8L209.4,26.9L209.9,26.1L210.5,25.3L211.2,24.5L211.5,24.5L211.8,24.6L212.1,24.7L212.4,24.8L212.7,24.9L213.0,24.9L213.1,26.0L213.2,27.0L213.3,28.0L213.4,29.0L213.4,30.0L213.4,31.0L213.5,31.0L213.7,31.1L213.8,31.1L214.0,31.2L214.1,31.2L214.3,31.3L214.5,31.3L214.6,31.4L214.8,31.4L214.9,31.5L215.1,31.5L215.2,31.6L215.8,30.7L216.4,29.9L217.0,29.1L217.6,28.3L218.3,27.5L218.9,26.8L219.2,26.9L219.5,27.0L219.8,27.1L220.1,27.2L220.4,27.3L220.7,27.4L220.8,28.4L220.8,29.5L220.8,30.5L220.8,31.5L220.7,32.5L220.6,33.5L220.8,33.5L220.9,33.6L221.1,33.6L221.3,33.7L221.4,33.7L221.6,33.8L221.7,33.9L221.9,33.9L222.0,34.0L222.2,34.0L222.3,34.1L222.5,34.2L223.1,33.4L223.7,32.6L224.4,31.9L225.1,31.1L225.8,30.4L226.5,29.7L226.8,29.8L227.1,29.9L227.4,30.1L227.7,30.2L228.0,30.3L228.3,30.4L228.2,31.5L228.2,32.5L228.1,33.5L228.0,34.5L227.9,35.5L227.7,36.5L227.9,36.5L228.0,36.6L228.2,36.7L228.3,36.7L228.5,36.8L228.6,36.9L228.8,37.0L228.9,37.0L229.0,37.1L229.2,37.2L229.3,37.2L229.5,37.3L230.1,36.6L230.8,35.9L231.6,35.2L232.3,34.5L233.1,33.8L233.9,33.1L234.1,33.3L234.4,33.4L234.7,33.6L235.0,33.7L235.3,33.9L235.5,34.0L235.4,35.0L235.3,36.1L235.2,37.1L235.0,38.1L234.8,39.0L234.6,40.0L234.7,40.1L234.8,40.1L235.0,40.2L235.1,40.3L235.3,40.4L235.4,40.5L235.5,40.6L235.7,40.6L235.8,40.7L236.0,40.8L236.1,40.9L236.2,41.0L237.0,40.3L237.7,39.6L238.5,39.0L239.3,38.3L240.1,37.7L240.9,37.1L241.2,37.3L241.5,37.5L241.7,37.6L242.0,37.8L242.3,38.0L242.5,38.1L242.4,39.2L242.2,40.2L241.9,41.1L241.7,42.1L241.4,43.1L241.1,44.0L241.2,44.1L241.4,44.2L241.5,44.3L241.6,44.4L241.8,44.5L241.9,44.6L242.0,44.7L242.2,44.7L242.3,44.8L242.4,44.9L242.6,45.0L242.7,45.1L243.5,44.5L244.3,43.9L245.1,43.3L245.9,42.7L246.8,42.2L247.7,41.6L247.9,41.8L248.2,42.0L248.4,42.2L248.7,42.4L248.9,42.6L249.2,42.8L248.9,43.8L248.7,44.8L248.4,45.7L248.0,46.7L247.7,47.6L247.3,48.5L247.5,48.6L247.6,48.7L247.7,48.8L247.8,48.9L248.0,49.0L248.1,49.1L248.2,49.2L248.3,49.3L248.5,49.4L248.6,49.5L248.7,49.6L248.9,49.7L249.7,49.2L250.5,48.6L251.4,48.1L252.2,47.6L253.1,47.1L254.1,46.6L254.3,46.8L254.5,47.1L254.8,47.3L255.0,47.5L255.3,47.7L255.5,47.9L255.2,48.9L254.8,49.8L254.5,50.8L254.1,51.7L253.6,52.6L253.2,53.5L253.3,53.6L253.4,53.7L253.6,53.8L253.7,53.9L253.8,54.0L253.9,54.1L254.0,54.3L254.2,54.4L254.3,54.5L254.4,54.6L254.5,54.7L254.6,54.8L255.5,54.3L256.4,53.8L257.2,53.4L258.2,52.9L259.1,52.5L260.0,52.1L260.3,52.3L260.5,52.6L260.7,52.8L260.9,53.0L261.2,53.2L261.4,53.5L261.0,54.4L260.6,55.3L260.1,56.3L259.7,57.1L259.2,58.0L258.7,58.9L258.8,59.0L258.9,59.1L259.0,59.2L259.1,59.3L259.2,59.5L259.4,59.6L259.5,59.7L259.6,59.8L259.7,59.9L259.8,60.1L259.9,60.2L260.0,60.3L260.9,59.9L261.8,59.4L262.7,59.0L263.7,58.7L264.6,58.3L265.6,58.0L265.8,58.2L266.0,58.5L266.2,58.7L266.4,59.0L266.7,59.2L266.9,59.4L266.4,60.4L265.9,61.3L265.4,62.1L264.9,63.0L264.3,63.8L263.8,64.6L263.9,64.8L264.0,64.9L264.1,65.0L264.2,65.2L264.3,65.3L264.4,65.4L264.5,65.5L264.6,65.7L264.7,65.8L264.8,65.9L264.9,66.0L265.0,66.2L265.9,65.8L266.8,65.5L267.8,65.1L268.7,64.8L269.7,64.6L270.7,64.3L270.9,64.6L271.1,64.8L271.3,65.1L271.5,65.3L271.7,65.6L271.9,65.8L271.3,66.7L270.8,67.6L270.2,68.4L269.6,69.2L269.0,70.0L268.4,70.8L268.5,70.9L268.6,71.1L268.7,71.2L268.8,71.3L268.8,71.5L268.9,71.6L269.0,71.7L269.1,71.9L269.2,72.0L269.3,72.1L269.4,72.3L269.5,72.4L270.4,72.1L271.4,71.8L272.4,71.6L273.3,71.3L274.3,71.1L275.4,71.0L275.5,71.2L275.7,71.5L275.9,71.8L276.0,72.0L276.2,72.3L276.4,72.6L275.8,73.4L275.2,74.2L274.5,75.0L273.9,75.8L273.2,76.5L272.5,77.3L272.6,77.4L272.7,77.5L272.8,77.7L272.9,77.8L272.9,78.0L273.0,78.1L273.1,78.2L273.2,78.4L273.3,78.5L273.4,78.7L273.4,78.8L273.5,78.9L274.5,78.7L275.4,78.5L276.4,78.3L277.4,78.2L278.5,78.1L279.5,78.0L279.6,78.2L279.8,78.5L279.9,78.8L280.1,79.1L280.2,79.4L280.4,79.6L279.7,80.4L279.0,81.2L278.3,81.9L277.6,82.7L276.9,83.4L276.2,84.0L276.3,84.2L276.3,84.3L276.4,84.5L276.5,84.6L276.5,84.7L276.6,84.9L276.7,85.0L276.8,85.2L276.8,85.3L276.9,85.5L277.0,85.6L277.0,85.8L278.0,85.6L279.0,85.5L280.0,85.4L281.0,85.3L282.0,85.3L283.1,85.2L283.2,85.5L283.3,85.8L283.4,86.1L283.6,86.4L283.7,86.7L283.8,87.0L283.1,87.7L282.4,88.4L281.6,89.1L280.9,89.8L280.1,90.4L279.3,91.0L279.4,91.2L279.5,91.3L279.5,91.5L279.6,91.6L279.6,91.8L279.7,91.9L279.8,92.1L279.8,92.2L279.9,92.4L279.9,92.6L280.0,92.7L280.0,92.9L281.0,92.8L282.0,92.7L283.0,92.7L284.0,92.7L285.1,92.7L286.1,92.8L286.2,93.1L286.3,93.4L286.4,93.7L286.5,94.0L286.6,94.3L286.7,94.6L286.0,95.2L285.2,95.9L284.4,96.5L283.6,97.1L282.8,97.7L281.9,98.3L282.0,98.4L282.0,98.6L282.1,98.7L282.1,98.9L282.2,99.0L282.2,99.2L282.3,99.4L282.3,99.5L282.4,99.7L282.4,99.8L282.5,100.0L282.5,100.1L283.5,100.1L284.5,100.1L285.5,100.2L286.5,100.3L287.5,100.4L288.6,100.5L288.6,100.8L288.7,101.1L288.8,101.4L288.9,101.7L289.0,102.0L289.0,102.3L288.2,103.0L287.4,103.6L286.6,104.1L285.7,104.7L284.9,105.2L284.0,105.7L284.0,105.8L284.1,106.0L284.1,106.1L284.1,106.3L284.2,106.5L284.2,106.6L284.3,106.8L284.3,106.9L284.3,107.1L284.4,107.3L284.4,107.4L284.4,107.6L285.4,107.6L286.4,107.7L287.4,107.9L288.4,108.0L289.4,108.2L290.4,108.4L290.5,108.7L290.5,109.0L290.6,109.3L290.7,109.6L290.7,110.0L290.8,110.3L289.9,110.8L289.0,111.4L288.2,111.9L287.3,112.3L286.4,112.8L285.5,113.2L285.5,113.4L285.6,113.5L285.6,113.7L285.6,113.9L285.6,114.0L285.7,114.2L285.7,114.3L285.7,114.5L285.7,114.7L285.7,114.8L285.8,115.0L285.8,115.1L286.8,115.3L287.8,115.4L288.7,115.6L289.7,115.9L290.7,116.1L291.7,116.4L291.7,116.7L291.8,117.0L291.8,117.4L291.9,117.7L291.9,118.0L291.9,118.3L291.0,118.8L290.1,119.3L289.2,119.7L288.3,120.1L287.4,120.5L286.4,120.8L286.4,121.0L286.5,121.2L286.5,121.3L286.5,121.5L286.5,121.7L286.5,121.8L286.5,122.0L286.5,122.1L286.5,122.3L286.6,122.5L286.6,122.6L286.6,122.8L287.5,123.0L288.5,123.2L289.5,123.5L290.4,123.8L291.4,124.1L292.4,124.5L292.4,124.8L292.4,125.1L292.4,125.4L292.4,125.8L292.4,126.1L292.5,126.4L291.5,126.8L290.6,127.2L289.6,127.6L288.7,127.9L287.7,128.2L286.8,128.5L286.8,128.7L286.8,128.8L286.8,129.0L286.8,129.2L286.8,129.3Z" fill="#e0e4f0" fill-rule="evenodd"/>
 <circle cx="184.00" cy="129.50" r="117.0" fill="none" stroke="#747474" stroke-width="0.8"/>
 <path d="M286.8,129.5L286.8,129.7L286.8,129.8L286.8,130.0L286.8,130.2L286.8,130.3L286.8,130.5L287.7,130.8L288.7,131.1L289.6,131.4L290.6,131.8L291.5,132.2L292.5,132.6L292.4,132.9L292.4,133.2L292.4,133.6L292.4,133.9L292.4,134.2L292.4,134.5L291.4,134.9L290.4,135.2L289.5,135.5L288.5,135.8L287.5,136.0L286.6,136.2L286.6,136.4L286.6,136.5L286.5,136.7L286.5,136.9L286.5,137.0L286.5,137.2L286.5,137.3L286.5,137.5L286.5,137.7L286.5,137.8L286.4,138.0L286.4,138.2L287.4,138.5L288.3,138.9L289.2,139.3L290.1,139.7L291.0,140.2L291.9,140.7L291.9,141.0L291.9,141.3L291.8,141.6L291.8,142.0L291.7,142.3L291.7,142.6L290.7,142.9L289.7,143.1L288.7,143.4L287.8,143.6L286.8,143.7L285.8,143.9L285.8,144.0L285.7,144.2L285.7,144.3L285.7,144.5L285.7,144.7L285.7,144.8L285.6,145.0L285.6,145.1L285.6,145.3L285.6,145.5L285.5,145.6L285.5,145.8L286.4,146.2L287.3,146.7L288.2,147.1L289.0,147.6L289.9,148.2L290.8,148.7L290.7,149.0L290.7,149.4L290.6,149.7L290.5,150.0L290.5,150.3L290.4,150.6L289.4,150.8L288.4,151.0L287.4,151.1L286.4,151.3L285.4,151.4L284.4,151.4L284.4,151.6L284.4,151.7L284.3,151.9L284.3,152.1L284.3,152.2L284.2,152.4L284.2,152.5L284.1,152.7L284.1,152.9L284.1,153.0L284.0,153.2L284.0,153.3L284.9,153.8L285.7,154.3L286.6,154.9L287.4,155.4L288.2,156.0L289.0,156.7L289.0,157.0L288.9,157.3L288.8,157.6L288.7,157.9L288.6,158.2L288.6,158.5L287.5,158.6L286.5,158.7L285.5,158.8L284.5,158.9L283.5,158.9L282.5,158.9L282.5,159.0L282.4,159.2L282.4,159.3L282.3,159.5L282.3,159.6L282.2,159.8L282.2,160.0L282.1,160.1L282.1,160.3L282.0,160.4L282.0,160.6L281.9,160.7L282.8,161.3L283.6,161.9L284.4,162.5L285.2,163.1L286.0,163.8L286.7,164.4L286.6,164.7L286.5,165.0L286.4,165.3L286.3,165.6L286.2,165.9L286.1,166.2L285.1,166.3L284.0,166.3L283.0,166.3L282.0,166.3L281.0,166.2L280.0,166.1L280.0,166.3L279.9,166.4L279.9,166.6L279.8,166.8L279.8,166.9L279.7,167.1L279.6,167.2L279.6,167.4L279.5,167.5L279.5,167.7L279.4,167.8L279.3,168.0L280.1,168.6L280.9,169.2L281.6,169.9L282.4,170.6L283.1,171.3L283.8,172.0L283.7,172.3L283.6,172.6L283.4,172.9L283.3,173.2L283.2,173.5L283.1,173.8L282.0,173.7L281.0,173.7L280.0,173.6L279.0,173.5L278.0,173.4L277.0,173.2L277.0,173.4L276.9,173.5L276.8,173.7L276.8,173.8L276.7,174.0L276.6,174.1L276.5,174.3L276.5,174.4L276.4,174.5L276.3,174.7L276.3,174.8L276.2,175.0L276.9,175.6L277.6,176.3L278.3,177.1L279.0,177.8L279.7,178.6L280.4,179.4L280.2,179.6L280.1,179.9L279.9,180.2L279.8,180.5L279.6,180.8L279.5,181.0L278.5,180.9L277.4,180.8L276.4,180.7L275.4,180.5L274.5,180.3L273.5,180.1L273.4,180.2L273.4,180.3L273.3,180.5L273.2,180.6L273.1,180.8L273.0,180.9L272.9,181.0L272.9,181.2L272.8,181.3L272.7,181.5L272.6,181.6L272.5,181.7L273.2,182.5L273.9,183.2L274.5,184.0L275.2,184.8L275.8,185.6L276.4,186.4L276.2,186.7L276.0,187.0L275.9,187.2L275.7,187.5L275.5,187.8L275.4,188.0L274.3,187.9L273.3,187.7L272.4,187.4L271.4,187.2L270.4,186.9L269.5,186.6L269.4,186.7L269.3,186.9L269.2,187.0L269.1,187.1L269.0,187.3L268.9,187.4L268.8,187.5L268.8,187.7L268.7,187.8L268.6,187.9L268.5,188.1L268.4,188.2L269.0,189.0L269.6,189.8L270.2,190.6L270.8,191.4L271.3,192.3L271.9,193.2L271.7,193.4L271.5,193.7L271.3,193.9L271.1,194.2L270.9,194.4L270.7,194.7L269.7,194.4L268.7,194.2L267.8,193.9L266.8,193.5L265.9,193.2L265.0,192.8L264.9,193.0L264.8,193.1L264.7,193.2L264.6,193.3L264.5,193.5L264.4,193.6L264.3,193.7L264.2,193.8L264.1,194.0L264.0,194.1L263.9,194.2L263.8,194.4L264.3,195.2L264.9,196.0L265.4,196.9L265.9,197.7L266.4,198.6L266.9,199.6L266.7,199.8L266.4,200.0L266.2,200.3L266.0,200.5L265.8,200.8L265.6,201.0L264.6,200.7L263.7,200.3L262.7,200.0L261.8,199.6L260.9,199.1L260.0,198.7L259.9,198.8L259.8,198.9L259.7,199.1L259.6,199.2L259.5,199.3L259.4,199.4L259.2,199.5L259.1,199.7L259.0,199.8L258.9,199.9L258.8,200.0L258.7,200.1L259.2,201.0L259.7,201.9L260.1,202.7L260.6,203.7L261.0,204.6L261.4,205.5L261.2,205.8L260.9,206.0L260.7,206.2L260.5,206.4L260.3,206.7L260.0,206.9L259.1,206.5L258.2,206.1L257.2,205.6L256.4,205.2L255.5,204.7L254.6,204.2L254.5,204.3L254.4,204.4L254.3,204.5L254.2,204.6L254.0,204.7L253.9,204.9L253.8,205.0L253.7,205.1L253.6,205.2L253.4,205.3L253.3,205.4L253.2,205.5L253.6,206.4L254.1,207.3L254.5,208.2L254.8,209.2L255.2,210.1L255.5,211.1L255.3,211.3L255.0,211.5L254.8,211.7L254.5,211.9L254.3,212.2L254.1,212.4L253.1,211.9L252.2,211.4L251.4,210.9L250.5,210.4L249.7,209.8L248.9,209.3L248.7,209.4L248.6,209.5L248.5,209.6L248.3,209.7L248.2,209.8L248.1,209.9L248.0,210.0L247.8,210.1L247.7,210.2L247.6,210.3L247.5,210.4L247.3,210.5L247.7,211.4L248.0,212.3L248.4,213.3L248.7,214.2L248.9,215.2L249.2,216.2L248.9,216.4L248.7,216.6L248.4,216.8L248.2,217.0L247.9,217.2L247.7,217.4L246.8,216.8L245.9,216.3L245.1,215.7L244.3,215.1L243.5,214.5L242.7,213.9L242.6,214.0L242.4,214.1L242.3,214.2L242.2,214.3L242.0,214.3L241.9,214.4L241.8,214.5L241.6,214.6L241.5,214.7L241.4,214.8L241.2,214.9L241.1,215.0L241.4,215.9L241.7,216.9L241.9,217.9L242.2,218.8L242.4,219.8L242.5,220.9L242.3,221.0L242.0,221.2L241.7,221.4L241.5,221.5L241.2,221.7L240.9,221.9L240.1,221.3L239.3,220.7L238.5,220.0L237.7,219.4L237.0,218.7L236.2,218.0L236.1,218.1L236.0,218.2L235.8,218.3L235.7,218.4L235.5,218.4L235.4,218.5L235.3,218.6L235.1,218.7L235.0,218.8L234.8,218.9L234.7,218.9L234.6,219.0L234.8,220.0L235.0,220.9L235.2,221.9L235.3,222.9L235.4,224.0L235.5,225.0L235.3,225.1L235.0,225.3L234.7,225.4L234.4,225.6L234.1,225.7L233.9,225.9L233.1,225.2L232.3,224.5L231.6,223.8L230.8,223.1L230.1,222.4L229.5,221.7L229.3,221.8L229.2,221.8L229.0,221.9L228.9,222.0L228.8,222.0L228.6,222.1L228.5,222.2L228.3,222.3L228.2,222.3L228.0,222.4L227.9,222.5L227.7,222.5L227.9,223.5L228.0,224.5L228.1,225.5L228.2,226.5L228.2,227.5L228.3,228.6L228.0,228.7L227.7,228.8L227.4,228.9L227.1,229.1L226.8,229.2L226.5,229.3L225.8,228.6L225.1,227.9L224.4,227.1L223.7,226.4L223.1,225.6L222.5,224.8L222.3,224.9L222.2,225.0L222.0,225.0L221.9,225.1L221.7,225.1L221.6,225.2L221.4,225.3L221.3,225.3L221.1,225.4L220.9,225.4L220.8,225.5L220.6,225.5L220.7,226.5L220.8,227.5L220.8,228.5L220.8,229.5L220.8,230.6L220.7,231.6L220.4,231.7L220.1,231.8L219.8,231.9L219.5,232.0L219.2,232.1L218.9,232.2L218.3,231.5L217.6,230.7L217.0,229.9L216.4,229.1L215.8,228.3L215.2,227.4L215.1,227.5L214.9,227.5L214.8,227.6L214.6,227.6L214.5,227.7L214.3,227.7L214.1,227.8L214.0,227.8L213.8,227.9L213.7,227.9L213.5,228.0L213.4,228.0L213.4,229.0L213.4,230.0L213.3,231.0L213.2,232.0L213.1,233.0L213.0,234.1L212.7,234.1L212.4,234.2L212.1,234.3L211.8,234.4L211.5,234.5L211.2,234.5L210.5,233.7L209.9,232.9L209.4,232.1L208.8,231.2L208.3,230.4L207.8,229.5L207.7,229.5L207.5,229.6L207.4,229.6L207.2,229.6L207.0,229.7L206.9,229.7L206.7,229.8L206.6,229.8L206.4,229.8L206.2,229.9L206.1,229.9L205.9,229.9L205.9,230.9L205.8,231.9L205.6,232.9L205.5,233.9L205.3,234.9L205.1,235.9L204.8,236.0L204.5,236.0L204.2,236.1L203.9,236.2L203.5,236.2L203.2,236.3L202.7,235.4L202.1,234.5L201.6,233.7L201.2,232.8L200.7,231.9L200.3,231.0L200.1,231.0L200.0,231.1L199.8,231.1L199.6,231.1L199.5,231.1L199.3,231.2L199.2,231.2L199.0,231.2L198.8,231.2L198.7,231.2L198.5,231.3L198.4,231.3L198.2,232.3L198.1,233.3L197.9,234.2L197.6,235.2L197.4,236.2L197.1,237.2L196.8,237.2L196.5,237.3L196.1,237.3L195.8,237.4L195.5,237.4L195.2,237.4L194.7,236.5L194.2,235.6L193.8,234.7L193.4,233.8L193.0,232.9L192.7,231.9L192.5,231.9L192.3,232.0L192.2,232.0L192.0,232.0L191.8,232.0L191.7,232.0L191.5,232.0L191.4,232.0L191.2,232.0L191.0,232.1L190.9,232.1L190.7,232.1L190.5,233.0L190.3,234.0L190.0,235.0L189.7,235.9L189.4,236.9L189.0,237.9L188.7,237.9L188.4,237.9L188.1,237.9L187.7,237.9L187.4,237.9L187.1,238.0L186.7,237.0L186.3,236.1L185.9,235.1L185.6,234.2L185.3,233.2L185.0,232.3L184.8,232.3L184.7,232.3L184.5,232.3L184.3,232.3L184.2,232.3L184.0,232.3L183.8,232.3L183.7,232.3L183.5,232.3L183.3,232.3L183.2,232.3L183.0,232.3L182.7,233.2L182.4,234.2L182.1,235.1L181.7,236.1L181.3,237.0L180.9,238.0L180.6,237.9L180.3,237.9L179.9,237.9L179.6,237.9L179.3,237.9L179.0,237.9L178.6,236.9L178.3,235.9L178.0,235.0L177.7,234.0L177.5,233.0L177.3,232.1L177.1,232.1L177.0,232.1L176.8,232.0L176.6,232.0L176.5,232.0L176.3,232.0L176.2,232.0L176.0,232.0L175.8,232.0L175.7,232.0L175.5,231.9L175.3,231.9L175.0,232.9L174.6,233.8L174.2,234.7L173.8,235.6L173.3,236.5L172.8,237.4L172.5,237.4L172.2,237.4L171.9,237.3L171.5,237.3L171.2,237.2L170.9,237.2L170.6,236.2L170.4,235.2L170.1,234.2L169.9,233.3L169.8,232.3L169.6,231.3L169.5,231.3L169.3,231.2L169.2,231.2L169.0,231.2L168.8,231.2L168.7,231.2L168.5,231.1L168.4,231.1L168.2,231.1L168.0,231.1L167.9,231.0L167.7,231.0L167.3,231.9L166.8,232.8L166.4,233.7L165.9,234.5L165.3,235.4L164.8,236.3L164.5,236.2L164.1,236.2L163.8,236.1L163.5,236.0L163.2,236.0L162.9,235.9L162.7,234.9L162.5,233.9L162.4,232.9L162.2,231.9L162.1,230.9L162.1,229.9L161.9,229.9L161.8,229.9L161.6,229.8L161.4,229.8L161.3,229.8L161.1,229.7L161.0,229.7L160.8,229.6L160.6,229.6L160.5,229.6L160.3,229.5L160.2,229.5L159.7,230.4L159.2,231.2L158.6,232.1L158.1,232.9L157.5,233.7L156.8,234.5L156.5,234.5L156.2,234.4L155.9,234.3L155.6,234.2L155.3,234.1L155.0,234.1L154.9,233.0L154.8,232.0L154.7,231.0L154.6,230.0L154.6,229.0L154.6,228.0L154.5,228.0L154.3,227.9L154.2,227.9L154.0,227.8L153.9,227.8L153.7,227.7L153.5,227.7L153.4,227.6L153.2,227.6L153.1,227.5L152.9,227.5L152.8,227.4L152.2,228.3L151.6,229.1L151.0,229.9L150.4,230.7L149.7,231.5L149.1,232.2L148.8,232.1L148.5,232.0L148.2,231.9L147.9,231.8L147.6,231.7L147.3,231.6L147.2,230.6L147.2,229.5L147.2,228.5L147.2,227.5L147.3,226.5L147.4,225.5L147.2,225.5L147.1,225.4L146.9,225.4L146.7,225.3L146.6,225.3L146.4,225.2L146.3,225.1L146.1,225.1L146.0,225.0L145.8,225.0L145.7,224.9L145.5,224.8L144.9,225.6L144.3,226.4L143.6,227.1L142.9,227.9L142.2,228.6L141.5,229.3L141.2,229.2L140.9,229.1L140.6,228.9L140.3,228.8L140.0,228.7L139.7,228.6L139.8,227.5L139.8,226.5L139.9,225.5L140.0,224.5L140.1,223.5L140.3,222.5L140.1,222.5L140.0,222.4L139.8,222.3L139.7,222.3L139.5,222.2L139.4,222.1L139.2,222.0L139.1,222.0L139.0,221.9L138.8,221.8L138.7,221.8L138.5,221.7L137.9,222.4L137.2,223.1L136.4,223.8L135.7,224.5L134.9,225.2L134.1,225.9L133.9,225.7L133.6,225.6L133.3,225.4L133.0,225.3L132.7,225.1L132.5,225.0L132.6,224.0L132.7,222.9L132.8,221.9L133.0,220.9L133.2,220.0L133.4,219.0L133.3,218.9L133.2,218.9L133.0,218.8L132.9,218.7L132.7,218.6L132.6,218.5L132.5,218.4L132.3,218.4L132.2,218.3L132.0,218.2L131.9,218.1L131.8,218.0L131.0,218.7L130.3,219.4L129.5,220.0L128.7,220.7L127.9,221.3L127.1,221.9L126.8,221.7L126.5,221.5L126.3,221.4L126.0,221.2L125.7,221.0L125.5,220.9L125.6,219.8L125.8,218.8L126.1,217.9L126.3,216.9L126.6,215.9L126.9,215.0L126.8,214.9L126.6,214.8L126.5,214.7L126.4,214.6L126.2,214.5L126.1,214.4L126.0,214.3L125.8,214.3L125.7,214.2L125.6,214.1L125.4,214.0L125.3,213.9L124.5,214.5L123.7,215.1L122.9,215.7L122.1,216.3L121.2,216.8L120.3,217.4L120.1,217.2L119.8,217.0L119.6,216.8L119.3,216.6L119.1,216.4L118.8,216.2L119.1,215.2L119.3,214.2L119.6,213.3L120.0,212.3L120.3,211.4L120.7,210.5L120.5,210.4L120.4,210.3L120.3,210.2L120.2,210.1L120.0,210.0L119.9,209.9L119.8,209.8L119.7,209.7L119.5,209.6L119.4,209.5L119.3,209.4L119.1,209.3L118.3,209.8L117.5,210.4L116.6,210.9L115.8,211.4L114.9,211.9L113.9,212.4L113.7,212.2L113.5,211.9L113.2,211.7L113.0,211.5L112.7,211.3L112.5,211.1L112.8,210.1L113.2,209.2L113.5,208.2L113.9,207.3L114.4,206.4L114.8,205.5L114.7,205.4L114.6,205.3L114.4,205.2L114.3,205.1L114.2,205.0L114.1,204.9L114.0,204.7L113.8,204.6L113.7,204.5L113.6,204.4L113.5,204.3L113.4,204.2L112.5,204.7L111.6,205.2L110.8,205.6L109.8,206.1L108.9,206.5L108.0,206.9L107.7,206.7L107.5,206.4L107.3,206.2L107.1,206.0L106.8,205.8L106.6,205.5L107.0,204.6L107.4,203.7L107.9,202.7L108.3,201.9L108.8,201.0L109.3,200.1L109.2,200.0L109.1,199.9L109.0,199.8L108.9,199.7L108.8,199.5L108.6,199.4L108.5,199.3L108.4,199.2L108.3,199.1L108.2,198.9L108.1,198.8L108.0,198.7L107.1,199.1L106.2,199.6L105.3,200.0L104.3,200.3L103.4,200.7L102.4,201.0L102.2,200.8L102.0,200.5L101.8,200.3L101.6,200.0L101.3,199.8L101.1,199.6L101.6,198.6L102.1,197.7L102.6,196.9L103.1,196.0L103.7,195.2L104.2,194.4L104.1,194.2L104.0,194.1L103.9,194.0L103.8,193.8L103.7,193.7L103.6,193.6L103.5,193.5L103.4,193.3L103.3,193.2L103.2,193.1L103.1,193.0L103.0,192.8L102.1,193.2L101.2,193.5L100.2,193.9L99.3,194.2L98.3,194.4L97.3,194.7L97.1,194.4L96.9,194.2L96.7,193.9L96.5,193.7L96.3,193.4L96.1,193.2L96.7,192.3L97.2,191.4L97.8,190.6L98.4,189.8L99.0,189.0L99.6,188.2L99.5,188.1L99.4,187.9L99.3,187.8L99.2,187.7L99.2,187.5L99.1,187.4L99.0,187.3L98.9,187.1L98.8,187.0L98.7,186.9L98.6,186.7L98.5,186.6L97.6,186.9L96.6,187.2L95.6,187.4L94.7,187.7L93.7,187.9L92.6,188.0L92.5,187.8L92.3,187.5L92.1,187.2L92.0,187.0L91.8,186.7L91.6,186.4L92.2,185.6L92.8,184.8L93.5,184.0L94.1,183.2L94.8,182.5L95.5,181.7L95.4,181.6L95.3,181.5L95.2,181.3L95.1,181.2L95.1,181.0L95.0,180.9L94.9,180.8L94.8,180.6L94.7,180.5L94.6,180.3L94.6,180.2L94.5,180.1L93.5,180.3L92.6,180.5L91.6,180.7L90.6,180.8L89.5,180.9L88.5,181.0L88.4,180.8L88.2,180.5L88.1,180.2L87.9,179.9L87.8,179.6L87.6,179.4L88.3,178.6L89.0,177.8L89.7,177.1L90.4,176.3L91.1,175.6L91.8,175.0L91.7,174.8L91.7,174.7L91.6,174.5L91.5,174.4L91.5,174.3L91.4,174.1L91.3,174.0L91.2,173.8L91.2,173.7L91.1,173.5L91.0,173.4L91.0,173.2L90.0,173.4L89.0,173.5L88.0,173.6L87.0,173.7L86.0,173.7L84.9,173.8L84.8,173.5L84.7,173.2L84.6,172.9L84.4,172.6L84.3,172.3L84.2,172.0L84.9,171.3L85.6,170.6L86.4,169.9L87.1,169.2L87.9,168.6L88.7,168.0L88.6,167.8L88.5,167.7L88.5,167.5L88.4,167.4L88.4,167.2L88.3,167.1L88.2,166.9L88.2,166.8L88.1,166.6L88.1,166.4L88.0,166.3L88.0,166.1L87.0,166.2L86.0,166.3L85.0,166.3L84.0,166.3L82.9,166.3L81.9,166.2L81.8,165.9L81.7,165.6L81.6,165.3L81.5,165.0L81.4,164.7L81.3,164.4L82.0,163.8L82.8,163.1L83.6,162.5L84.4,161.9L85.2,161.3L86.1,160.7L86.0,160.6L86.0,160.4L85.9,160.3L85.9,160.1L85.8,160.0L85.8,159.8L85.7,159.6L85.7,159.5L85.6,159.3L85.6,159.2L85.5,159.0L85.5,158.9L84.5,158.9L83.5,158.9L82.5,158.8L81.5,158.7L80.5,158.6L79.4,158.5L79.4,158.2L79.3,157.9L79.2,157.6L79.1,157.3L79.0,157.0L79.0,156.7L79.8,156.0L80.6,155.4L81.4,154.9L82.3,154.3L83.1,153.8L84.0,153.3L84.0,153.2L83.9,153.0L83.9,152.9L83.9,152.7L83.8,152.5L83.8,152.4L83.7,152.2L83.7,152.1L83.7,151.9L83.6,151.7L83.6,151.6L83.6,151.4L82.6,151.4L81.6,151.3L80.6,151.1L79.6,151.0L78.6,150.8L77.6,150.6L77.5,150.3L77.5,150.0L77.4,149.7L77.3,149.4L77.3,149.0L77.2,148.7L78.1,148.2L79.0,147.6L79.8,147.1L80.7,146.7L81.6,146.2L82.5,145.8L82.5,145.6L82.4,145.5L82.4,145.3L82.4,145.1L82.4,145.0L82.3,144.8L82.3,144.7L82.3,144.5L82.3,144.3L82.3,144.2L82.2,144.0L82.2,143.9L81.2,143.7L80.2,143.6L79.3,143.4L78.3,143.1L77.3,142.9L76.3,142.6L76.3,142.3L76.2,142.0L76.2,141.6L76.1,141.3L76.1,141.0L76.1,140.7L77.0,140.2L77.9,139.7L78.8,139.3L79.7,138.9L80.6,138.5L81.6,138.2L81.6,138.0L81.5,137.8L81.5,137.7L81.5,137.5L81.5,137.3L81.5,137.2L81.5,137.0L81.5,136.9L81.5,136.7L81.4,136.5L81.4,136.4L81.4,136.2L80.5,136.0L79.5,135.8L78.5,135.5L77.6,135.2L76.6,134.9L75.6,134.5L75.6,134.2L75.6,133.9L75.6,133.6L75.6,133.2L75.6,132.9L75.5,132.6L76.5,132.2L77.4,131.8L78.4,131.4L79.3,131.1L80.3,130.8L81.2,130.5L81.2,130.3L81.2,130.2L81.2,130.0L81.2,129.8L81.2,129.7L81.2,129.5L81.2,129.3L81.2,129.2L81.2,129.0L81.2,128.8L81.2,128.7L81.2,128.5L80.3,128.2L79.3,127.9L78.4,127.6L77.4,127.2L76.5,126.8L75.5,126.4L75.6,126.1L75.6,125.8L75.6,125.4L75.6,125.1L75.6,124.8L75.6,124.5L76.6,124.1L77.6,123.8L78.5,123.5L79.5,123.2L80.5,123.0L81.4,122.8L81.4,122.6L81.4,122.5L81.5,122.3L81.5,122.1L81.5,122.0L81.5,121.8L81.5,121.7L81.5,121.5L81.5,121.3L81.5,121.2L81.6,121.0L81.6,120.8L80.6,120.5L79.7,120.1L78.8,119.7L77.9,119.3L77.0,118.8L76.1,118.3L76.1,118.0L76.1,117.7L76.2,117.4L76.2,117.0L76.3,116.7L76.3,116.4L77.3,116.1L78.3,115.9L79.3,115.6L80.2,115.4L81.2,115.3L82.2,115.1L82.2,115.0L82.3,114.8L82.3,114.7L82.3,114.5L82.3,114.3L82.3,114.2L82.4,114.0L82.4,113.9L82.4,113.7L82.4,113.5L82.5,113.4L82.5,113.2L81.6,112.8L80.7,112.3L79.8,111.9L79.0,111.4L78.1,110.8L77.2,110.3L77.3,110.0L77.3,109.6L77.4,109.3L77.5,109.0L77.5,108.7L77.6,108.4L78.6,108.2L79.6,108.0L80.6,107.9L81.6,107.7L82.6,107.6L83.6,107.6L83.6,107.4L83.6,107.3L83.7,107.1L83.7,106.9L83.7,106.8L83.8,106.6L83.8,106.5L83.9,106.3L83.9,106.1L83.9,106.0L84.0,105.8L84.0,105.7L83.1,105.2L82.3,104.7L81.4,104.1L80.6,103.6L79.8,103.0L79.0,102.3L79.0,102.0L79.1,101.7L79.2,101.4L79.3,101.1L79.4,100.8L79.4,100.5L80.5,100.4L81.5,100.3L82.5,100.2L83.5,100.1L84.5,100.1L85.5,100.1L85.5,100.0L85.6,99.8L85.6,99.7L85.7,99.5L85.7,99.4L85.8,99.2L85.8,99.0L85.9,98.9L85.9,98.7L86.0,98.6L86.0,98.4L86.1,98.3L85.2,97.7L84.4,97.1L83.6,96.5L82.8,95.9L82.0,95.2L81.3,94.6L81.4,94.3L81.5,94.0L81.6,93.7L81.7,93.4L81.8,93.1L81.9,92.8L82.9,92.7L84.0,92.7L85.0,92.7L86.0,92.7L87.0,92.8L88.0,92.9L88.0,92.7L88.1,92.6L88.1,92.4L88.2,92.2L88.2,92.1L88.3,91.9L88.4,91.8L88.4,91.6L88.5,91.5L88.5,91.3L88.6,91.2L88.7,91.0L87.9,90.4L87.1,89.8L86.4,89.1L85.6,88.4L84.9,87.7L84.2,87.0L84.3,86.7L84.4,86.4L84.6,86.1L84.7,85.8L84.8,85.5L84.9,85.2L86.0,85.3L87.0,85.3L88.0,85.4L89.0,85.5L90.0,85.6L91.0,85.8L91.0,85.6L91.1,85.5L91.2,85.3L91.2,85.2L91.3,85.0L91.4,84.9L91.5,84.7L91.5,84.6L91.6,84.5L91.7,84.3L91.7,84.2L91.8,84.0L91.1,83.4L90.4,82.7L89.7,81.9L89.0,81.2L88.3,80.4L87.6,79.6L87.8,79.4L87.9,79.1L88.1,78.8L88.2,78.5L88.4,78.2L88.5,78.0L89.5,78.1L90.6,78.2L91.6,78.3L92.6,78.5L93.5,78.7L94.5,78.9L94.6,78.8L94.6,78.7L94.7,78.5L94.8,78.4L94.9,78.2L95.0,78.1L95.1,78.0L95.1,77.8L95.2,77.7L95.3,77.5L95.4,77.4L95.5,77.3L94.8,76.5L94.1,75.8L93.5,75.0L92.8,74.2L92.2,73.4L91.6,72.6L91.8,72.3L92.0,72.0L92.1,71.8L92.3,71.5L92.5,71.2L92.6,71.0L93.7,71.1L94.7,71.3L95.6,71.6L96.6,71.8L97.6,72.1L98.5,72.4L98.6,72.3L98.7,72.1L98.8,72.0L98.9,71.9L99.0,71.7L99.1,71.6L99.2,71.5L99.2,71.3L99.3,71.2L99.4,71.1L99.5,70.9L99.6,70.8L99.0,70.0L98.4,69.2L97.8,68.4L97.2,67.6L96.7,66.7L96.1,65.8L96.3,65.6L96.5,65.3L96.7,65.1L96.9,64.8L97.1,64.6L97.3,64.3L98.3,64.6L99.3,64.8L100.2,65.1L101.2,65.5L102.1,65.8L103.0,66.2L103.1,66.0L103.2,65.9L103.3,65.8L103.4,65.7L103.5,65.5L103.6,65.4L103.7,65.3L103.8,65.2L103.9,65.0L104.0,64.9L104.1,64.8L104.2,64.6L103.7,63.8L103.1,63.0L102.6,62.1L102.1,61.3L101.6,60.4L101.1,59.4L101.3,59.2L101.6,59.0L101.8,58.7L102.0,58.5L102.2,58.2L102.4,58.0L103.4,58.3L104.3,58.7L105.3,59.0L106.2,59.4L107.1,59.9L108.0,60.3L108.1,60.2L108.2,60.1L108.3,59.9L108.4,59.8L108.5,59.7L108.6,59.6L108.8,59.5L108.9,59.3L109.0,59.2L109.1,59.1L109.2,59.0L109.3,58.9L108.8,58.0L108.3,57.1L107.9,56.3L107.4,55.3L107.0,54.4L106.6,53.5L106.8,53.2L107.1,53.0L107.3,52.8L107.5,52.6L107.7,52.3L108.0,52.1L108.9,52.5L109.8,52.9L110.8,53.4L111.6,53.8L112.5,54.3L113.4,54.8L113.5,54.7L113.6,54.6L113.7,54.5L113.8,54.4L114.0,54.3L114.1,54.1L114.2,54.0L114.3,53.9L114.4,53.8L114.6,53.7L114.7,53.6L114.8,53.5L114.4,52.6L113.9,51.7L113.5,50.8L113.2,49.8L112.8,48.9L112.5,47.9L112.7,47.7L113.0,47.5L113.2,47.3L113.5,47.1L113.7,46.8L113.9,46.6L114.9,47.1L115.8,47.6L116.6,48.1L117.5,48.6L118.3,49.2L119.1,49.7L119.3,49.6L119.4,49.5L119.5,49.4L119.7,49.3L119.8,49.2L119.9,49.1L120.0,49.0L120.2,48.9L120.3,48.8L120.4,48.7L120.5,48.6L120.7,48.5L120.3,47.6L120.0,46.7L119.6,45.7L119.3,44.8L119.1,43.8L118.8,42.8L119.1,42.6L119.3,42.4L119.6,42.2L119.8,42.0L120.1,41.8L120.3,41.6L121.2,42.2L122.1,42.7L122.9,43.3L123.7,43.9L124.5,44.5L125.3,45.1L125.4,45.0L125.6,44.9L125.7,44.8L125.8,44.7L126.0,44.7L126.1,44.6L126.2,44.5L126.4,44.4L126.5,44.3L126.6,44.2L126.8,44.1L126.9,44.0L126.6,43.1L126.3,42.1L126.1,41.1L125.8,40.2L125.6,39.2L125.5,38.1L125.7,38.0L126.0,37.8L126.3,37.6L126.5,37.5L126.8,37.3L127.1,37.1L127.9,37.7L128.7,38.3L129.5,39.0L130.3,39.6L131.0,40.3L131.8,41.0L131.9,40.9L132.0,40.8L132.2,40.7L132.3,40.6L132.5,40.6L132.6,40.5L132.7,40.4L132.9,40.3L133.0,40.2L133.2,40.1L133.3,40.1L133.4,40.0L133.2,39.0L133.0,38.1L132.8,37.1L132.7,36.1L132.6,35.0L132.5,34.0L132.7,33.9L133.0,33.7L133.3,33.6L133.6,33.4L133.9,33.3L134.1,33.1L134.9,33.8L135.7,34.5L136.4,35.2L137.2,35.9L137.9,36.6L138.5,37.3L138.7,37.2L138.8,37.2L139.0,37.1L139.1,37.0L139.2,37.0L139.4,36.9L139.5,36.8L139.7,36.7L139.8,36.7L140.0,36.6L140.1,36.5L140.3,36.5L140.1,35.5L140.0,34.5L139.9,33.5L139.8,32.5L139.8,31.5L139.7,30.4L140.0,30.3L140.3,30.2L140.6,30.1L140.9,29.9L141.2,29.8L141.5,29.7L142.2,30.4L142.9,31.1L143.6,31.9L144.3,32.6L144.9,33.4L145.5,34.2L145.7,34.1L145.8,34.0L146.0,34.0L146.1,33.9L146.3,33.9L146.4,33.8L146.6,33.7L146.7,33.7L146.9,33.6L147.1,33.6L147.2,33.5L147.4,33.5L147.3,32.5L147.2,31.5L147.2,30.5L147.2,29.5L147.2,28.4L147.3,27.4L147.6,27.3L147.9,27.2L148.2,27.1L148.5,27.0L148.8,26.9L149.1,26.8L149.7,27.5L150.4,28.3L151.0,29.1L151.6,29.9L152.2,30.7L152.8,31.6L152.9,31.5L153.1,31.5L153.2,31.4L153.4,31.4L153.5,31.3L153.7,31.3L153.9,31.2L154.0,31.2L154.2,31.1L154.3,31.1L154.5,31.0L154.6,31.0L154.6,30.0L154.6,29.0L154.7,28.0L154.8,27.0L154.9,26.0L155.0,24.9L155.3,24.9L155.6,24.8L155.9,24.7L156.2,24.6L156.5,24.5L156.8,24.5L157.5,25.3L158.1,26.1L158.6,26.9L159.2,27.8L159.7,28.6L160.2,29.5L160.3,29.5L160.5,29.4L160.6,29.4L160.8,29.4L161.0,29.3L161.1,29.3L161.3,29.2L161.4,29.2L161.6,29.2L161.8,29.1L161.9,29.1L162.1,29.1L162.1,28.1L162.2,27.1L162.4,26.1L162.5,25.1L162.7,24.1L162.9,23.1L163.2,23.0L163.5,23.0L163.8,22.9L164.1,22.8L164.5,22.8L164.8,22.7L165.3,23.6L165.9,24.5L166.4,25.3L166.8,26.2L167.3,27.1L167.7,28.0L167.9,28.0L168.0,27.9L168.2,27.9L168.4,27.9L168.5,27.9L168.7,27.8L168.8,27.8L169.0,27.8L169.2,27.8L169.3,27.8L169.5,27.7L169.6,27.7L169.8,26.7L169.9,25.7L170.1,24.8L170.4,23.8L170.6,22.8L170.9,21.8L171.2,21.8L171.5,21.7L171.9,21.7L172.2,21.6L172.5,21.6L172.8,21.6L173.3,22.5L173.8,23.4L174.2,24.3L174.6,25.2L175.0,26.1L175.3,27.1L175.5,27.1L175.7,27.0L175.8,27.0L176.0,27.0L176.2,27.0L176.3,27.0L176.5,27.0L176.6,27.0L176.8,27.0L177.0,26.9L177.1,26.9L177.3,26.9L177.5,26.0L177.7,25.0L178.0,24.0L178.3,23.1L178.6,22.1L179.0,21.1L179.3,21.1L179.6,21.1L179.9,21.1L180.3,21.1L180.6,21.1L180.9,21.0L181.3,22.0L181.7,22.9L182.1,23.9L182.4,24.8L182.7,25.8L183.0,26.7L183.2,26.7L183.3,26.7L183.5,26.7L183.7,26.7L183.8,26.7L184.0,26.7L184.2,26.7L184.3,26.7L184.5,26.7L184.7,26.7L184.8,26.7L185.0,26.7L185.3,25.8L185.6,24.8L185.9,23.9L186.3,22.9L186.7,22.0L187.1,21.0L187.4,21.1L187.7,21.1L188.1,21.1L188.4,21.1L188.7,21.1L189.0,21.1L189.4,22.1L189.7,23.1L190.0,24.0L190.3,25.0L190.5,26.0L190.7,26.9L190.9,26.9L191.0,26.9L191.2,27.0L191.4,27.0L191.5,27.0L191.7,27.0L191.8,27.0L192.0,27.0L192.2,27.0L192.3,27.0L192.5,27.1L192.7,27.1L193.0,26.1L193.4,25.2L193.8,24.3L194.2,23.4L194.7,22.5L195.2,21.6L195.5,21.6L195.8,21.6L196.1,21.7L196.5,21.7L196.8,21.8L197.1,21.8L197.4,22.8L197.6,23.8L197.9,24.8L198.1,25.7L198.2,26.7L198.4,27.7L198.5,27.7L198.7,27.8L198.8,27.8L199.0,27.8L199.2,27.8L199.3,27.8L199.5,27.9L199.6,27.9L199.8,27.9L200.0,27.9L200.1,28.0L200.3,28.0L200.7,27.1L201.2,26.2L201.6,25.3L202.1,24.5L202.7,23.6L203.2,22.7L203.5,22.8L203.9,22.8L204.2,22.9L204.5,23.0L204.8,23.0L205.1,23.1L205.3,24.1L205.5,25.1L205.6,26.1L205.8,27.1L205.9,28.1L205.9,29.1L206.1,29.1L206.2,29.1L206.4,29.2L206.6,29.2L206.7,29.2L206.9,29.3L207.0,29.3L207.2,29.4L207.4,29.4L207.5,29.4L207.7,29.5L207.8,29.5L208.3,28.6L208.8,27.8L209.4,26.9L209.9,26.1L210.5,25.3L211.2,24.5L211.5,24.5L211.8,24.6L212.1,24.7L212.4,24.8L212.7,24.9L213.0,24.9L213.1,26.0L213.2,27.0L213.3,28.0L213.4,29.0L213.4,30.0L213.4,31.0L213.5,31.0L213.7,31.1L213.8,31.1L214.0,31.2L214.1,31.2L214.3,31.3L214.5,31.3L214.6,31.4L214.8,31.4L214.9,31.5L215.1,31.5L215.2,31.6L215.8,30.7L216.4,29.9L217.0,29.1L217.6,28.3L218.3,27.5L218.9,26.8L219.2,26.9L219.5,27.0L219.8,27.1L220.1,27.2L220.4,27.3L220.7,27.4L220.8,28.4L220.8,29.5L220.8,30.5L220.8,31.5L220.7,32.5L220.6,33.5L220.8,33.5L220.9,33.6L221.1,33.6L221.3,33.7L221.4,33.7L221.6,33.8L221.7,33.9L221.9,33.9L222.0,34.0L222.2,34.0L222.3,34.1L222.5,34.2L223.1,33.4L223.7,32.6L224.4,31.9L225.1,31.1L225.8,30.4L226.5,29.7L226.8,29.8L227.1,29.9L227.4,30.1L227.7,30.2L228.0,30.3L228.3,30.4L228.2,31.5L228.2,32.5L228.1,33.5L228.0,34.5L227.9,35.5L227.7,36.5L227.9,36.5L228.0,36.6L228.2,36.7L228.3,36.7L228.5,36.8L228.6,36.9L228.8,37.0L228.9,37.0L229.0,37.1L229.2,37.2L229.3,37.2L229.5,37.3L230.1,36.6L230.8,35.9L231.6,35.2L232.3,34.5L233.1,33.8L233.9,33.1L234.1,33.3L234.4,33.4L234.7,33.6L235.0,33.7L235.3,33.9L235.5,34.0L235.4,35.0L235.3,36.1L235.2,37.1L235.0,38.1L234.8,39.0L234.6,40.0L234.7,40.1L234.8,40.1L235.0,40.2L235.1,40.3L235.3,40.4L235.4,40.5L235.5,40.6L235.7,40.6L235.8,40.7L236.0,40.8L236.1,40.9L236.2,41.0L237.0,40.3L237.7,39.6L238.5,39.0L239.3,38.3L240.1,37.7L240.9,37.1L241.2,37.3L241.5,37.5L241.7,37.6L242.0,37.8L242.3,38.0L242.5,38.1L242.4,39.2L242.2,40.2L241.9,41.1L241.7,42.1L241.4,43.1L241.1,44.0L241.2,44.1L241.4,44.2L241.5,44.3L241.6,44.4L241.8,44.5L241.9,44.6L242.0,44.7L242.2,44.7L242.3,44.8L242.4,44.9L242.6,45.0L242.7,45.1L243.5,44.5L244.3,43.9L245.1,43.3L245.9,42.7L246.8,42.2L247.7,41.6L247.9,41.8L248.2,42.0L248.4,42.2L248.7,42.4L248.9,42.6L249.2,42.8L248.9,43.8L248.7,44.8L248.4,45.7L248.0,46.7L247.7,47.6L247.3,48.5L247.5,48.6L247.6,48.7L247.7,48.8L247.8,48.9L248.0,49.0L248.1,49.1L248.2,49.2L248.3,49.3L248.5,49.4L248.6,49.5L248.7,49.6L248.9,49.7L249.7,49.2L250.5,48.6L251.4,48.1L252.2,47.6L253.1,47.1L254.1,46.6L254.3,46.8L254.5,47.1L254.8,47.3L255.0,47.5L255.3,47.7L255.5,47.9L255.2,48.9L254.8,49.8L254.5,50.8L254.1,51.7L253.6,52.6L253.2,53.5L253.3,53.6L253.4,53.7L253.6,53.8L253.7,53.9L253.8,54.0L253.9,54.1L254.0,54.3L254.2,54.4L254.3,54.5L254.4,54.6L254.5,54.7L254.6,54.8L255.5,54.3L256.4,53.8L257.2,53.4L258.2,52.9L259.1,52.5L260.0,52.1L260.3,52.3L260.5,52.6L260.7,52.8L260.9,53.0L261.2,53.2L261.4,53.5L261.0,54.4L260.6,55.3L260.1,56.3L259.7,57.1L259.2,58.0L258.7,58.9L258.8,59.0L258.9,59.1L259.0,59.2L259.1,59.3L259.2,59.5L259.4,59.6L259.5,59.7L259.6,59.8L259.7,59.9L259.8,60.1L259.9,60.2L260.0,60.3L260.9,59.9L261.8,59.4L262.7,59.0L263.7,58.7L264.6,58.3L265.6,58.0L265.8,58.2L266.0,58.5L266.2,58.7L266.4,59.0L266.7,59.2L266.9,59.4L266.4,60.4L265.9,61.3L265.4,62.1L264.9,63.0L264.3,63.8L263.8,64.6L263.9,64.8L264.0,64.9L264.1,65.0L264.2,65.2L264.3,65.3L264.4,65.4L264.5,65.5L264.6,65.7L264.7,65.8L264.8,65.9L264.9,66.0L265.0,66.2L265.9,65.8L266.8,65.5L267.8,65.1L268.7,64.8L269.7,64.6L270.7,64.3L270.9,64.6L271.1,64.8L271.3,65.1L271.5,65.3L271.7,65.6L271.9,65.8L271.3,66.7L270.8,67.6L270.2,68.4L269.6,69.2L269.0,70.0L268.4,70.8L268.5,70.9L268.6,71.1L268.7,71.2L268.8,71.3L268.8,71.5L268.9,71.6L269.0,71.7L269.1,71.9L269.2,72.0L269.3,72.1L269.4,72.3L269.5,72.4L270.4,72.1L271.4,71.8L272.4,71.6L273.3,71.3L274.3,71.1L275.4,71.0L275.5,71.2L275.7,71.5L275.9,71.8L276.0,72.0L276.2,72.3L276.4,72.6L275.8,73.4L275.2,74.2L274.5,75.0L273.9,75.8L273.2,76.5L272.5,77.3L272.6,77.4L272.7,77.5L272.8,77.7L272.9,77.8L272.9,78.0L273.0,78.1L273.1,78.2L273.2,78.4L273.3,78.5L273.4,78.7L273.4,78.8L273.5,78.9L274.5,78.7L275.4,78.5L276.4,78.3L277.4,78.2L278.5,78.1L279.5,78.0L279.6,78.2L279.8,78.5L279.9,78.8L280.1,79.1L280.2,79.4L280.4,79.6L279.7,80.4L279.0,81.2L278.3,81.9L277.6,82.7L276.9,83.4L276.2,84.0L276.3,84.2L276.3,84.3L276.4,84.5L276.5,84.6L276.5,84.7L276.6,84.9L276.7,85.0L276.8,85.2L276.8,85.3L276.9,85.5L277.0,85.6L277.0,85.8L278.0,85.6L279.0,85.5L280.0,85.4L281.0,85.3L282.0,85.3L283.1,85.2L283.2,85.5L283.3,85.8L283.4,86.1L283.6,86.4L283.7,86.7L283.8,87.0L283.1,87.7L282.4,88.4L281.6,89.1L280.9,89.8L280.1,90.4L279.3,91.0L279.4,91.2L279.5,91.3L279.5,91.5L279.6,91.6L279.6,91.8L279.7,91.9L279.8,92.1L279.8,92.2L279.9,92.4L279.9,92.6L280.0,92.7L280.0,92.9L281.0,92.8L282.0,92.7L283.0,92.7L284.0,92.7L285.1,92.7L286.1,92.8L286.2,93.1L286.3,93.4L286.4,93.7L286.5,94.0L286.6,94.3L286.7,94.6L286.0,95.2L285.2,95.9L284.4,96.5L283.6,97.1L282.8,97.7L281.9,98.3L282.0,98.4L282.0,98.6L282.1,98.7L282.1,98.9L282.2,99.0L282.2,99.2L282.3,99.4L282.3,99.5L282.4,99.7L282.4,99.8L282.5,100.0L282.5,100.1L283.5,100.1L284.5,100.1L285.5,100.2L286.5,100.3L287.5,100.4L288.6,100.5L288.6,100.8L288.7,101.1L288.8,101.4L288.9,101.7L289.0,102.0L289.0,102.3L288.2,103.0L287.4,103.6L286.6,104.1L285.7,104.7L284.9,105.2L284.0,105.7L284.0,105.8L284.1,106.0L284.1,106.1L284.1,106.3L284.2,106.5L284.2,106.6L284.3,106.8L284.3,106.9L284.3,107.1L284.4,107.3L284.4,107.4L284.4,107.6L285.4,107.6L286.4,107.7L287.4,107.9L288.4,108.0L289.4,108.2L290.4,108.4L290.5,108.7L290.5,109.0L290.6,109.3L290.7,109.6L290.7,110.0L290.8,110.3L289.9,110.8L289.0,111.4L288.2,111.9L287.3,112.3L286.4,112.8L285.5,113.2L285.5,113.4L285.6,113.5L285.6,113.7L285.6,113.9L285.6,114.0L285.7,114.2L285.7,114.3L285.7,114.5L285.7,114.7L285.7,114.8L285.8,115.0L285.8,115.1L286.8,115.3L287.8,115.4L288.7,115.6L289.7,115.9L290.7,116.1L291.7,116.4L291.7,116.7L291.8,117.0L291.8,117.4L291.9,117.7L291.9,118.0L291.9,118.3L291.0,118.8L290.1,119.3L289.2,119.7L288.3,120.1L287.4,120.5L286.4,120.8L286.4,121.0L286.5,121.2L286.5,121.3L286.5,121.5L286.5,121.7L286.5,121.8L286.5,122.0L286.5,122.1L286.5,122.3L286.6,122.5L286.6,122.6L286.6,122.8L287.5,123.0L288.5,123.2L289.5,123.5L290.4,123.8L291.4,124.1L292.4,124.5L292.4,124.8L292.4,125.1L292.4,125.4L292.4,125.8L292.4,126.1L292.5,126.4L291.5,126.8L290.6,127.2L289.6,127.6L288.7,127.9L287.7,128.2L286.8,128.5L286.8,128.7L286.8,128.8L286.8,129.0L286.8,129.2L286.8,129.3Z" fill="none" stroke="#5a5a5a" stroke-width="0.9"/>
 <path d="M137.9,125.5L137.9,125.8L137.9,126.0L138.0,126.2L138.0,126.4L138.0,126.7L138.0,126.9L139.1,126.8L140.0,126.9L140.8,127.1L141.7,127.3L142.6,127.7L143.4,128.1L144.3,128.6L144.3,128.8L144.3,128.9L144.3,129.1L144.3,129.3L144.3,129.4L144.3,129.6L143.4,130.1L142.6,130.5L141.7,130.9L140.8,131.1L140.0,131.3L139.1,131.4L138.0,131.3L138.0,131.5L138.0,131.8L138.0,132.0L137.9,132.2L137.9,132.4L137.9,132.7L137.8,132.9L137.8,133.1L137.8,133.3L137.7,133.6L137.7,133.8L137.7,134.0L138.8,134.2L139.6,134.5L140.4,134.9L141.1,135.4L141.9,135.9L142.6,136.5L143.3,137.2L143.3,137.4L143.3,137.6L143.2,137.7L143.2,137.9L143.1,138.1L143.1,138.2L142.1,138.5L141.2,138.7L140.3,138.8L139.3,138.8L138.5,138.8L137.6,138.7L136.6,138.3L136.5,138.5L136.4,138.7L136.3,139.0L136.3,139.2L136.2,139.4L136.1,139.6L136.0,139.8L135.9,140.0L135.8,140.2L135.7,140.4L135.7,140.6L135.6,140.8L136.6,141.3L137.3,141.8L138.0,142.4L138.6,143.0L139.2,143.7L139.7,144.5L140.3,145.4L140.2,145.5L140.1,145.7L140.0,145.8L139.9,146.0L139.8,146.1L139.8,146.3L138.8,146.3L137.8,146.2L136.9,146.1L136.0,145.9L135.1,145.7L134.4,145.3L133.4,144.7L133.3,144.9L133.2,145.1L133.1,145.3L132.9,145.5L132.8,145.7L132.7,145.9L132.5,146.0L132.4,146.2L132.2,146.4L132.1,146.6L132.0,146.8L131.8,146.9L132.7,147.6L133.3,148.3L133.8,149.0L134.2,149.8L134.6,150.6L134.9,151.5L135.2,152.5L135.1,152.6L135.0,152.7L134.9,152.9L134.8,153.0L134.7,153.1L134.5,153.2L133.6,153.0L132.7,152.7L131.8,152.4L131.0,152.0L130.2,151.5L129.5,151.0L128.8,150.2L128.6,150.3L128.5,150.5L128.3,150.6L128.1,150.8L127.9,150.9L127.8,151.1L127.6,151.2L127.4,151.3L127.2,151.5L127.1,151.6L126.9,151.8L126.7,151.9L127.4,152.8L127.8,153.5L128.1,154.4L128.3,155.3L128.5,156.2L128.6,157.1L128.6,158.1L128.5,158.2L128.3,158.3L128.2,158.4L128.0,158.5L127.9,158.6L127.8,158.7L126.9,158.2L126.1,157.7L125.3,157.1L124.6,156.6L124.0,155.9L123.5,155.2L123.0,154.3L122.8,154.4L122.6,154.5L122.3,154.6L122.1,154.7L121.9,154.8L121.7,154.9L121.5,155.0L121.3,155.1L121.1,155.2L120.9,155.3L120.7,155.4L120.5,155.4L120.9,156.5L121.1,157.3L121.2,158.2L121.2,159.1L121.1,160.0L121.0,161.0L120.8,161.9L120.7,162.0L120.5,162.0L120.3,162.1L120.2,162.2L120.0,162.2L119.8,162.3L119.1,161.6L118.4,160.9L117.8,160.2L117.3,159.4L116.9,158.7L116.5,157.9L116.3,156.8L116.1,156.9L115.8,156.9L115.6,157.0L115.4,157.0L115.2,157.1L114.9,157.1L114.7,157.1L114.5,157.2L114.3,157.2L114.0,157.3L113.8,157.3L113.6,157.3L113.7,158.4L113.7,159.3L113.6,160.1L113.4,161.0L113.1,161.9L112.7,162.8L112.3,163.7L112.1,163.7L112.0,163.7L111.8,163.7L111.6,163.7L111.4,163.8L111.3,163.8L110.7,162.9L110.3,162.1L109.9,161.2L109.5,160.4L109.3,159.5L109.2,158.7L109.2,157.6L108.9,157.6L108.7,157.6L108.5,157.6L108.3,157.6L108.0,157.6L107.8,157.5L107.6,157.5L107.4,157.5L107.1,157.5L106.9,157.5L106.7,157.4L106.4,157.4L106.3,158.5L106.1,159.3L105.7,160.2L105.3,161.0L104.8,161.8L104.2,162.5L103.6,163.3L103.4,163.2L103.3,163.2L103.1,163.2L102.9,163.2L102.8,163.1L102.6,163.1L102.3,162.1L102.0,161.2L101.9,160.3L101.7,159.4L101.7,158.5L101.8,157.7L102.1,156.6L101.9,156.5L101.7,156.5L101.4,156.4L101.2,156.3L101.0,156.3L100.8,156.2L100.6,156.1L100.4,156.1L100.1,156.0L99.9,155.9L99.7,155.8L99.5,155.8L99.1,156.8L98.7,157.5L98.1,158.2L97.5,158.9L96.8,159.5L96.1,160.1L95.3,160.7L95.1,160.6L95.0,160.6L94.8,160.5L94.7,160.4L94.5,160.3L94.4,160.3L94.3,159.3L94.3,158.3L94.3,157.4L94.5,156.5L94.7,155.6L95.0,154.8L95.5,153.9L95.3,153.8L95.1,153.6L94.9,153.5L94.7,153.4L94.5,153.3L94.3,153.2L94.1,153.0L93.9,152.9L93.8,152.8L93.6,152.7L93.4,152.5L93.2,152.4L92.6,153.3L92.0,153.9L91.3,154.5L90.5,155.0L89.7,155.4L88.8,155.8L87.9,156.2L87.7,156.1L87.6,155.9L87.5,155.8L87.3,155.7L87.2,155.6L87.1,155.5L87.3,154.5L87.5,153.6L87.8,152.7L88.1,151.9L88.5,151.1L89.0,150.4L89.8,149.6L89.6,149.4L89.5,149.3L89.3,149.1L89.1,148.9L89.0,148.8L88.8,148.6L88.7,148.4L88.5,148.3L88.4,148.1L88.2,147.9L88.1,147.8L87.9,147.6L87.1,148.3L86.3,148.8L85.5,149.1L84.7,149.4L83.8,149.6L82.8,149.8L81.8,149.9L81.7,149.8L81.6,149.6L81.5,149.5L81.4,149.4L81.3,149.2L81.2,149.1L81.6,148.2L82.1,147.3L82.6,146.5L83.1,145.8L83.7,145.1L84.4,144.6L85.3,144.0L85.2,143.8L85.1,143.6L85.0,143.4L84.8,143.2L84.7,143.0L84.6,142.8L84.5,142.6L84.4,142.4L84.3,142.2L84.2,142.0L84.1,141.8L84.0,141.6L83.0,142.1L82.2,142.4L81.3,142.5L80.4,142.6L79.5,142.5L78.5,142.5L77.5,142.4L77.5,142.2L77.4,142.0L77.3,141.9L77.3,141.7L77.2,141.6L77.1,141.4L77.8,140.6L78.4,139.9L79.1,139.3L79.8,138.7L80.5,138.2L81.3,137.8L82.4,137.5L82.3,137.3L82.2,137.1L82.2,136.8L82.1,136.6L82.1,136.4L82.0,136.2L81.9,136.0L81.9,135.7L81.8,135.5L81.8,135.3L81.7,135.1L81.7,134.9L80.6,135.1L79.7,135.1L78.9,135.0L78.0,134.9L77.1,134.6L76.2,134.3L75.2,134.0L75.2,133.8L75.2,133.6L75.2,133.4L75.2,133.3L75.1,133.1L75.1,132.9L75.9,132.4L76.7,131.8L77.5,131.4L78.4,131.0L79.2,130.7L80.0,130.5L81.1,130.5L81.1,130.2L81.1,130.0L81.1,129.8L81.1,129.6L81.1,129.3L81.1,129.1L81.1,128.9L81.1,128.6L81.1,128.4L81.1,128.2L81.1,128.0L81.1,127.7L80.0,127.7L79.2,127.5L78.4,127.2L77.5,126.8L76.7,126.4L75.9,125.8L75.1,125.3L75.1,125.1L75.2,124.9L75.2,124.8L75.2,124.6L75.2,124.4L75.2,124.2L76.2,123.9L77.1,123.6L78.0,123.3L78.9,123.2L79.7,123.1L80.6,123.1L81.7,123.3L81.7,123.1L81.8,122.9L81.8,122.7L81.9,122.5L81.9,122.2L82.0,122.0L82.1,121.8L82.1,121.6L82.2,121.4L82.2,121.1L82.3,120.9L82.4,120.7L81.3,120.4L80.5,120.0L79.8,119.5L79.1,118.9L78.4,118.3L77.8,117.6L77.1,116.8L77.2,116.6L77.3,116.5L77.3,116.3L77.4,116.2L77.5,116.0L77.5,115.8L78.5,115.7L79.5,115.7L80.4,115.6L81.3,115.7L82.2,115.8L83.0,116.1L84.0,116.6L84.1,116.4L84.2,116.2L84.3,116.0L84.4,115.8L84.5,115.6L84.6,115.4L84.7,115.2L84.8,115.0L85.0,114.8L85.1,114.6L85.2,114.4L85.3,114.2L84.4,113.6L83.7,113.1L83.1,112.4L82.6,111.7L82.1,110.9L81.6,110.0L81.2,109.1L81.3,109.0L81.4,108.8L81.5,108.7L81.6,108.6L81.7,108.4L81.8,108.3L82.8,108.4L83.8,108.6L84.7,108.8L85.5,109.1L86.3,109.4L87.1,109.9L87.9,110.6L88.1,110.4L88.2,110.3L88.4,110.1L88.5,109.9L88.7,109.8L88.8,109.6L89.0,109.4L89.1,109.3L89.3,109.1L89.5,108.9L89.6,108.8L89.8,108.6L89.0,107.8L88.5,107.1L88.1,106.3L87.8,105.5L87.5,104.6L87.3,103.7L87.1,102.7L87.2,102.6L87.3,102.5L87.5,102.4L87.6,102.3L87.7,102.1L87.9,102.0L88.8,102.4L89.7,102.8L90.5,103.2L91.3,103.7L92.0,104.3L92.6,104.9L93.2,105.8L93.4,105.7L93.6,105.5L93.8,105.4L93.9,105.3L94.1,105.2L94.3,105.0L94.5,104.9L94.7,104.8L94.9,104.7L95.1,104.6L95.3,104.4L95.5,104.3L95.0,103.4L94.7,102.6L94.5,101.7L94.3,100.8L94.3,99.9L94.3,98.9L94.4,97.9L94.5,97.9L94.7,97.8L94.8,97.7L95.0,97.6L95.1,97.6L95.3,97.5L96.1,98.1L96.8,98.7L97.5,99.3L98.1,100.0L98.7,100.7L99.1,101.4L99.5,102.4L99.7,102.4L99.9,102.3L100.1,102.2L100.4,102.1L100.6,102.1L100.8,102.0L101.0,101.9L101.2,101.9L101.4,101.8L101.7,101.7L101.9,101.7L102.1,101.6L101.8,100.5L101.7,99.7L101.7,98.8L101.9,97.9L102.0,97.0L102.3,96.1L102.6,95.1L102.8,95.1L102.9,95.0L103.1,95.0L103.3,95.0L103.4,95.0L103.6,94.9L104.2,95.7L104.8,96.4L105.3,97.2L105.7,98.0L106.1,98.9L106.3,99.7L106.4,100.8L106.7,100.8L106.9,100.7L107.1,100.7L107.4,100.7L107.6,100.7L107.8,100.7L108.0,100.6L108.3,100.6L108.5,100.6L108.7,100.6L108.9,100.6L109.2,100.6L109.2,99.5L109.3,98.7L109.5,97.8L109.9,97.0L110.3,96.1L110.7,95.3L111.3,94.4L111.4,94.4L111.6,94.5L111.8,94.5L112.0,94.5L112.1,94.5L112.3,94.5L112.7,95.4L113.1,96.3L113.4,97.2L113.6,98.1L113.7,98.9L113.7,99.8L113.6,100.9L113.8,100.9L114.0,100.9L114.3,101.0L114.5,101.0L114.7,101.1L114.9,101.1L115.2,101.1L115.4,101.2L115.6,101.2L115.8,101.3L116.1,101.3L116.3,101.4L116.5,100.3L116.9,99.5L117.3,98.8L117.8,98.0L118.4,97.3L119.1,96.6L119.8,95.9L120.0,96.0L120.2,96.0L120.3,96.1L120.5,96.2L120.7,96.2L120.8,96.3L121.0,97.2L121.1,98.2L121.2,99.1L121.2,100.0L121.1,100.9L120.9,101.7L120.5,102.8L120.7,102.8L120.9,102.9L121.1,103.0L121.3,103.1L121.5,103.2L121.7,103.3L121.9,103.4L122.1,103.5L122.3,103.6L122.6,103.7L122.8,103.8L123.0,103.9L123.5,103.0L124.0,102.3L124.6,101.6L125.3,101.1L126.1,100.5L126.9,100.0L127.8,99.5L127.9,99.6L128.0,99.7L128.2,99.8L128.3,99.9L128.5,100.0L128.6,100.1L128.6,101.1L128.5,102.0L128.3,102.9L128.1,103.8L127.8,104.7L127.4,105.4L126.7,106.3L126.9,106.4L127.1,106.6L127.2,106.7L127.4,106.9L127.6,107.0L127.8,107.1L127.9,107.3L128.1,107.4L128.3,107.6L128.5,107.7L128.6,107.9L128.8,108.0L129.5,107.2L130.2,106.7L131.0,106.2L131.8,105.8L132.7,105.5L133.6,105.2L134.5,105.0L134.7,105.1L134.8,105.2L134.9,105.3L135.0,105.5L135.1,105.6L135.2,105.7L134.9,106.7L134.6,107.6L134.2,108.4L133.8,109.2L133.3,109.9L132.7,110.6L131.8,111.3L132.0,111.4L132.1,111.6L132.2,111.8L132.4,112.0L132.5,112.2L132.7,112.3L132.8,112.5L132.9,112.7L133.1,112.9L133.2,113.1L133.3,113.3L133.4,113.5L134.4,112.9L135.1,112.5L136.0,112.3L136.9,112.1L137.8,112.0L138.8,111.9L139.8,111.9L139.8,112.1L139.9,112.2L140.0,112.4L140.1,112.5L140.2,112.7L140.3,112.8L139.7,113.7L139.2,114.5L138.6,115.2L138.0,115.8L137.3,116.4L136.6,116.9L135.6,117.4L135.7,117.6L135.7,117.8L135.8,118.0L135.9,118.2L136.0,118.4L136.1,118.6L136.2,118.8L136.3,119.0L136.3,119.2L136.4,119.5L136.5,119.7L136.6,119.9L137.6,119.5L138.5,119.4L139.3,119.4L140.3,119.4L141.2,119.5L142.1,119.7L143.1,120.0L143.1,120.1L143.2,120.3L143.2,120.5L143.3,120.6L143.3,120.8L143.3,121.0L142.6,121.7L141.9,122.3L141.1,122.8L140.4,123.3L139.6,123.7L138.8,124.0L137.7,124.2L137.7,124.4L137.7,124.6L137.8,124.9L137.8,125.1L137.8,125.3Z" fill="#d8d8d8" stroke="#404040" stroke-width="0.9"/>
 <g clip-path="url(#mc)" fill="none" stroke="#3a3a3a" stroke-width="0.6"><path d="M137.9,125.5L137.9,125.8L137.9,126.0L138.0,126.2L138.0,126.4L138.0,126.7L138.0,126.9L139.1,126.8L140.0,126.9L140.8,127.1L141.7,127.3L142.6,127.7L143.4,128.1L144.3,128.6L144.3,128.8L144.3,128.9L144.3,129.1L144.3,129.3L144.3,129.4L144.3,129.6L143.4,130.1L142.6,130.5L141.7,130.9L140.8,131.1L140.0,131.3L139.1,131.4L138.0,131.3L138.0,131.5L138.0,131.8L138.0,132.0L137.9,132.2L137.9,132.4L137.9,132.7L137.8,132.9L137.8,133.1L137.8,133.3L137.7,133.6L137.7,133.8L137.7,134.0L138.8,134.2L139.6,134.5L140.4,134.9L141.1,135.4L141.9,135.9L142.6,136.5L143.3,137.2L143.3,137.4L143.3,137.6L143.2,137.7L143.2,137.9L143.1,138.1L143.1,138.2L142.1,138.5L141.2,138.7L140.3,138.8L139.3,138.8L138.5,138.8L137.6,138.7L136.6,138.3L136.5,138.5L136.4,138.7L136.3,139.0L136.3,139.2L136.2,139.4L136.1,139.6L136.0,139.8L135.9,140.0L135.8,140.2L135.7,140.4L135.7,140.6L135.6,140.8L136.6,141.3L137.3,141.8L138.0,142.4L138.6,143.0L139.2,143.7L139.7,144.5L140.3,145.4L140.2,145.5L140.1,145.7L140.0,145.8L139.9,146.0L139.8,146.1L139.8,146.3L138.8,146.3L137.8,146.2L136.9,146.1L136.0,145.9L135.1,145.7L134.4,145.3L133.4,144.7L133.3,144.9L133.2,145.1L133.1,145.3L132.9,145.5L132.8,145.7L132.7,145.9L132.5,146.0L132.4,146.2L132.2,146.4L132.1,146.6L132.0,146.8L131.8,146.9L132.7,147.6L133.3,148.3L133.8,149.0L134.2,149.8L134.6,150.6L134.9,151.5L135.2,152.5L135.1,152.6L135.0,152.7L134.9,152.9L134.8,153.0L134.7,153.1L134.5,153.2L133.6,153.0L132.7,152.7L131.8,152.4L131.0,152.0L130.2,151.5L129.5,151.0L128.8,150.2L128.6,150.3L128.5,150.5L128.3,150.6L128.1,150.8L127.9,150.9L127.8,151.1L127.6,151.2L127.4,151.3L127.2,151.5L127.1,151.6L126.9,151.8L126.7,151.9L127.4,152.8L127.8,153.5L128.1,154.4L128.3,155.3L128.5,156.2L128.6,157.1L128.6,158.1L128.5,158.2L128.3,158.3L128.2,158.4L128.0,158.5L127.9,158.6L127.8,158.7L126.9,158.2L126.1,157.7L125.3,157.1L124.6,156.6L124.0,155.9L123.5,155.2L123.0,154.3L122.8,154.4L122.6,154.5L122.3,154.6L122.1,154.7L121.9,154.8L121.7,154.9L121.5,155.0L121.3,155.1L121.1,155.2L120.9,155.3L120.7,155.4L120.5,155.4L120.9,156.5L121.1,157.3L121.2,158.2L121.2,159.1L121.1,160.0L121.0,161.0L120.8,161.9L120.7,162.0L120.5,162.0L120.3,162.1L120.2,162.2L120.0,162.2L119.8,162.3L119.1,161.6L118.4,160.9L117.8,160.2L117.3,159.4L116.9,158.7L116.5,157.9L116.3,156.8L116.1,156.9L115.8,156.9L115.6,157.0L115.4,157.0L115.2,157.1L114.9,157.1L114.7,157.1L114.5,157.2L114.3,157.2L114.0,157.3L113.8,157.3L113.6,157.3L113.7,158.4L113.7,159.3L113.6,160.1L113.4,161.0L113.1,161.9L112.7,162.8L112.3,163.7L112.1,163.7L112.0,163.7L111.8,163.7L111.6,163.7L111.4,163.8L111.3,163.8L110.7,162.9L110.3,162.1L109.9,161.2L109.5,160.4L109.3,159.5L109.2,158.7L109.2,157.6L108.9,157.6L108.7,157.6L108.5,157.6L108.3,157.6L108.0,157.6L107.8,157.5L107.6,157.5L107.4,157.5L107.1,157.5L106.9,157.5L106.7,157.4L106.4,157.4L106.3,158.5L106.1,159.3L105.7,160.2L105.3,161.0L104.8,161.8L104.2,162.5L103.6,163.3L103.4,163.2L103.3,163.2L103.1,163.2L102.9,163.2L102.8,163.1L102.6,163.1L102.3,162.1L102.0,161.2L101.9,160.3L101.7,159.4L101.7,158.5L101.8,157.7L102.1,156.6L101.9,156.5L101.7,156.5L101.4,156.4L101.2,156.3L101.0,156.3L100.8,156.2L100.6,156.1L100.4,156.1L100.1,156.0L99.9,155.9L99.7,155.8L99.5,155.8L99.1,156.8L98.7,157.5L98.1,158.2L97.5,158.9L96.8,159.5L96.1,160.1L95.3,160.7L95.1,160.6L95.0,160.6L94.8,160.5L94.7,160.4L94.5,160.3L94.4,160.3L94.3,159.3L94.3,158.3L94.3,157.4L94.5,156.5L94.7,155.6L95.0,154.8L95.5,153.9L95.3,153.8L95.1,153.6L94.9,153.5L94.7,153.4L94.5,153.3L94.3,153.2L94.1,153.0L93.9,152.9L93.8,152.8L93.6,152.7L93.4,152.5L93.2,152.4L92.6,153.3L92.0,153.9L91.3,154.5L90.5,155.0L89.7,155.4L88.8,155.8L87.9,156.2L87.7,156.1L87.6,155.9L87.5,155.8L87.3,155.7L87.2,155.6L87.1,155.5L87.3,154.5L87.5,153.6L87.8,152.7L88.1,151.9L88.5,151.1L89.0,150.4L89.8,149.6L89.6,149.4L89.5,149.3L89.3,149.1L89.1,148.9L89.0,148.8L88.8,148.6L88.7,148.4L88.5,148.3L88.4,148.1L88.2,147.9L88.1,147.8L87.9,147.6L87.1,148.3L86.3,148.8L85.5,149.1L84.7,149.4L83.8,149.6L82.8,149.8L81.8,149.9L81.7,149.8L81.6,149.6L81.5,149.5L81.4,149.4L81.3,149.2L81.2,149.1L81.6,148.2L82.1,147.3L82.6,146.5L83.1,145.8L83.7,145.1L84.4,144.6L85.3,144.0L85.2,143.8L85.1,143.6L85.0,143.4L84.8,143.2L84.7,143.0L84.6,142.8L84.5,142.6L84.4,142.4L84.3,142.2L84.2,142.0L84.1,141.8L84.0,141.6L83.0,142.1L82.2,142.4L81.3,142.5L80.4,142.6L79.5,142.5L78.5,142.5L77.5,142.4L77.5,142.2L77.4,142.0L77.3,141.9L77.3,141.7L77.2,141.6L77.1,141.4L77.8,140.6L78.4,139.9L79.1,139.3L79.8,138.7L80.5,138.2L81.3,137.8L82.4,137.5L82.3,137.3L82.2,137.1L82.2,136.8L82.1,136.6L82.1,136.4L82.0,136.2L81.9,136.0L81.9,135.7L81.8,135.5L81.8,135.3L81.7,135.1L81.7,134.9L80.6,135.1L79.7,135.1L78.9,135.0L78.0,134.9L77.1,134.6L76.2,134.3L75.2,134.0L75.2,133.8L75.2,133.6L75.2,133.4L75.2,133.3L75.1,133.1L75.1,132.9L75.9,132.4L76.7,131.8L77.5,131.4L78.4,131.0L79.2,130.7L80.0,130.5L81.1,130.5L81.1,130.2L81.1,130.0L81.1,129.8L81.1,129.6L81.1,129.3L81.1,129.1L81.1,128.9L81.1,128.6L81.1,128.4L81.1,128.2L81.1,128.0L81.1,127.7L80.0,127.7L79.2,127.5L78.4,127.2L77.5,126.8L76.7,126.4L75.9,125.8L75.1,125.3L75.1,125.1L75.2,124.9L75.2,124.8L75.2,124.6L75.2,124.4L75.2,124.2L76.2,123.9L77.1,123.6L78.0,123.3L78.9,123.2L79.7,123.1L80.6,123.1L81.7,123.3L81.7,123.1L81.8,122.9L81.8,122.7L81.9,122.5L81.9,122.2L82.0,122.0L82.1,121.8L82.1,121.6L82.2,121.4L82.2,121.1L82.3,120.9L82.4,120.7L81.3,120.4L80.5,120.0L79.8,119.5L79.1,118.9L78.4,118.3L77.8,117.6L77.1,116.8L77.2,116.6L77.3,116.5L77.3,116.3L77.4,116.2L77.5,116.0L77.5,115.8L78.5,115.7L79.5,115.7L80.4,115.6L81.3,115.7L82.2,115.8L83.0,116.1L84.0,116.6L84.1,116.4L84.2,116.2L84.3,116.0L84.4,115.8L84.5,115.6L84.6,115.4L84.7,115.2L84.8,115.0L85.0,114.8L85.1,114.6L85.2,114.4L85.3,114.2L84.4,113.6L83.7,113.1L83.1,112.4L82.6,111.7L82.1,110.9L81.6,110.0L81.2,109.1L81.3,109.0L81.4,108.8L81.5,108.7L81.6,108.6L81.7,108.4L81.8,108.3L82.8,108.4L83.8,108.6L84.7,108.8L85.5,109.1L86.3,109.4L87.1,109.9L87.9,110.6L88.1,110.4L88.2,110.3L88.4,110.1L88.5,109.9L88.7,109.8L88.8,109.6L89.0,109.4L89.1,109.3L89.3,109.1L89.5,108.9L89.6,108.8L89.8,108.6L89.0,107.8L88.5,107.1L88.1,106.3L87.8,105.5L87.5,104.6L87.3,103.7L87.1,102.7L87.2,102.6L87.3,102.5L87.5,102.4L87.6,102.3L87.7,102.1L87.9,102.0L88.8,102.4L89.7,102.8L90.5,103.2L91.3,103.7L92.0,104.3L92.6,104.9L93.2,105.8L93.4,105.7L93.6,105.5L93.8,105.4L93.9,105.3L94.1,105.2L94.3,105.0L94.5,104.9L94.7,104.8L94.9,104.7L95.1,104.6L95.3,104.4L95.5,104.3L95.0,103.4L94.7,102.6L94.5,101.7L94.3,100.8L94.3,99.9L94.3,98.9L94.4,97.9L94.5,97.9L94.7,97.8L94.8,97.7L95.0,97.6L95.1,97.6L95.3,97.5L96.1,98.1L96.8,98.7L97.5,99.3L98.1,100.0L98.7,100.7L99.1,101.4L99.5,102.4L99.7,102.4L99.9,102.3L100.1,102.2L100.4,102.1L100.6,102.1L100.8,102.0L101.0,101.9L101.2,101.9L101.4,101.8L101.7,101.7L101.9,101.7L102.1,101.6L101.8,100.5L101.7,99.7L101.7,98.8L101.9,97.9L102.0,97.0L102.3,96.1L102.6,95.1L102.8,95.1L102.9,95.0L103.1,95.0L103.3,95.0L103.4,95.0L103.6,94.9L104.2,95.7L104.8,96.4L105.3,97.2L105.7,98.0L106.1,98.9L106.3,99.7L106.4,100.8L106.7,100.8L106.9,100.7L107.1,100.7L107.4,100.7L107.6,100.7L107.8,100.7L108.0,100.6L108.3,100.6L108.5,100.6L108.7,100.6L108.9,100.6L109.2,100.6L109.2,99.5L109.3,98.7L109.5,97.8L109.9,97.0L110.3,96.1L110.7,95.3L111.3,94.4L111.4,94.4L111.6,94.5L111.8,94.5L112.0,94.5L112.1,94.5L112.3,94.5L112.7,95.4L113.1,96.3L113.4,97.2L113.6,98.1L113.7,98.9L113.7,99.8L113.6,100.9L113.8,100.9L114.0,100.9L114.3,101.0L114.5,101.0L114.7,101.1L114.9,101.1L115.2,101.1L115.4,101.2L115.6,101.2L115.8,101.3L116.1,101.3L116.3,101.4L116.5,100.3L116.9,99.5L117.3,98.8L117.8,98.0L118.4,97.3L119.1,96.6L119.8,95.9L120.0,96.0L120.2,96.0L120.3,96.1L120.5,96.2L120.7,96.2L120.8,96.3L121.0,97.2L121.1,98.2L121.2,99.1L121.2,100.0L121.1,100.9L120.9,101.7L120.5,102.8L120.7,102.8L120.9,102.9L121.1,103.0L121.3,103.1L121.5,103.2L121.7,103.3L121.9,103.4L122.1,103.5L122.3,103.6L122.6,103.7L122.8,103.8L123.0,103.9L123.5,103.0L124.0,102.3L124.6,101.6L125.3,101.1L126.1,100.5L126.9,100.0L127.8,99.5L127.9,99.6L128.0,99.7L128.2,99.8L128.3,99.9L128.5,100.0L128.6,100.1L128.6,101.1L128.5,102.0L128.3,102.9L128.1,103.8L127.8,104.7L127.4,105.4L126.7,106.3L126.9,106.4L127.1,106.6L127.2,106.7L127.4,106.9L127.6,107.0L127.8,107.1L127.9,107.3L128.1,107.4L128.3,107.6L128.5,107.7L128.6,107.9L128.8,108.0L129.5,107.2L130.2,106.7L131.0,106.2L131.8,105.8L132.7,105.5L133.6,105.2L134.5,105.0L134.7,105.1L134.8,105.2L134.9,105.3L135.0,105.5L135.1,105.6L135.2,105.7L134.9,106.7L134.6,107.6L134.2,108.4L133.8,109.2L133.3,109.9L132.7,110.6L131.8,111.3L132.0,111.4L132.1,111.6L132.2,111.8L132.4,112.0L132.5,112.2L132.7,112.3L132.8,112.5L132.9,112.7L133.1,112.9L133.2,113.1L133.3,113.3L133.4,113.5L134.4,112.9L135.1,112.5L136.0,112.3L136.9,112.1L137.8,112.0L138.8,111.9L139.8,111.9L139.8,112.1L139.9,112.2L140.0,112.4L140.1,112.5L140.2,112.7L140.3,112.8L139.7,113.7L139.2,114.5L138.6,115.2L138.0,115.8L137.3,116.4L136.6,116.9L135.6,117.4L135.7,117.6L135.7,117.8L135.8,118.0L135.9,118.2L136.0,118.4L136.1,118.6L136.2,118.8L136.3,119.0L136.3,119.2L136.4,119.5L136.5,119.7L136.6,119.9L137.6,119.5L138.5,119.4L139.3,119.4L140.3,119.4L141.2,119.5L142.1,119.7L143.1,120.0L143.1,120.1L143.2,120.3L143.2,120.5L143.3,120.6L143.3,120.8L143.3,121.0L142.6,121.7L141.9,122.3L141.1,122.8L140.4,123.3L139.6,123.7L138.8,124.0L137.7,124.2L137.7,124.4L137.7,124.6L137.8,124.9L137.8,125.1L137.8,125.3Z"/><path d="M85.8,159.8L85.7,159.6L85.7,159.5L85.6,159.3L85.6,159.2L85.5,159.0L85.5,158.9L84.5,158.9L83.5,158.9L82.5,158.8L81.5,158.7L80.5,158.6L79.4,158.5L79.4,158.2L79.3,157.9L79.2,157.6L79.1,157.3L79.0,157.0L79.0,156.7L79.8,156.0L80.6,155.4L81.4,154.9L82.3,154.3L83.1,153.8L84.0,153.3L84.0,153.2L83.9,153.0L83.9,152.9L83.9,152.7L83.8,152.5L83.8,152.4L83.7,152.2L83.7,152.1L83.7,151.9L83.6,151.7L83.6,151.6L83.6,151.4L82.6,151.4L81.6,151.3L80.6,151.1L79.6,151.0L78.6,150.8L77.6,150.6L77.5,150.3L77.5,150.0L77.4,149.7L77.3,149.4L77.3,149.0L77.2,148.7L78.1,148.2L79.0,147.6L79.8,147.1L80.7,146.7L81.6,146.2L82.5,145.8L82.5,145.6L82.4,145.5L82.4,145.3L82.4,145.1L82.4,145.0L82.3,144.8L82.3,144.7L82.3,144.5L82.3,144.3L82.3,144.2L82.2,144.0L82.2,143.9L81.2,143.7L80.2,143.6L79.3,143.4L78.3,143.1L77.3,142.9L76.3,142.6L76.3,142.3L76.2,142.0L76.2,141.6L76.1,141.3L76.1,141.0L76.1,140.7L77.0,140.2L77.9,139.7L78.8,139.3L79.7,138.9L80.6,138.5L81.6,138.2L81.6,138.0L81.5,137.8L81.5,137.7L81.5,137.5L81.5,137.3L81.5,137.2L81.5,137.0L81.5,136.9L81.5,136.7L81.4,136.5L81.4,136.4L81.4,136.2L80.5,136.0L79.5,135.8L78.5,135.5L77.6,135.2L76.6,134.9L75.6,134.5L75.6,134.2L75.6,133.9L75.6,133.6L75.6,133.2L75.6,132.9L75.5,132.6L76.5,132.2L77.4,131.8L78.4,131.4L79.3,131.1L80.3,130.8L81.2,130.5L81.2,130.3L81.2,130.2L81.2,130.0L81.2,129.8L81.2,129.7L81.2,129.5L81.2,129.3L81.2,129.2L81.2,129.0L81.2,128.8L81.2,128.7L81.2,128.5L80.3,128.2L79.3,127.9L78.4,127.6L77.4,127.2L76.5,126.8L75.5,126.4L75.6,126.1L75.6,125.8L75.6,125.4L75.6,125.1L75.6,124.8L75.6,124.5L76.6,124.1L77.6,123.8L78.5,123.5L79.5,123.2L80.5,123.0L81.4,122.8L81.4,122.6L81.4,122.5L81.5,122.3L81.5,122.1L81.5,122.0L81.5,121.8L81.5,121.7L81.5,121.5L81.5,121.3L81.5,121.2L81.6,121.0L81.6,120.8L80.6,120.5L79.7,120.1L78.8,119.7L77.9,119.3L77.0,118.8L76.1,118.3L76.1,118.0L76.1,117.7L76.2,117.4L76.2,117.0L76.3,116.7L76.3,116.4L77.3,116.1L78.3,115.9L79.3,115.6L80.2,115.4L81.2,115.3L82.2,115.1L82.2,115.0L82.3,114.8L82.3,114.7L82.3,114.5L82.3,114.3L82.3,114.2L82.4,114.0L82.4,113.9L82.4,113.7L82.4,113.5L82.5,113.4L82.5,113.2L81.6,112.8L80.7,112.3L79.8,111.9L79.0,111.4L78.1,110.8L77.2,110.3L77.3,110.0L77.3,109.6L77.4,109.3L77.5,109.0L77.5,108.7L77.6,108.4L78.6,108.2L79.6,108.0L80.6,107.9L81.6,107.7L82.6,107.6L83.6,107.6L83.6,107.4L83.6,107.3L83.7,107.1L83.7,106.9L83.7,106.8L83.8,106.6L83.8,106.5L83.9,106.3L83.9,106.1L83.9,106.0L84.0,105.8L84.0,105.7L83.1,105.2L82.3,104.7L81.4,104.1L80.6,103.6L79.8,103.0L79.0,102.3L79.0,102.0L79.1,101.7L79.2,101.4L79.3,101.1L79.4,100.8L79.4,100.5L80.5,100.4L81.5,100.3L82.5,100.2L83.5,100.1L84.5,100.1L85.5,100.1"/></g>
 <path d="M103.10,129.10H116.10M109.60,122.60V135.60M177.50,129.50H190.50M184.00,123.00V136.00" stroke="#444" stroke-width="0.8" fill="none"/>
</svg>
<div class="t" style="left:96px;top:353px">Drehwinkel [°]</div><div class="gb" style="left:73.5px;top:363.5px"><svg class="a" style="left:0;top:0" width="29" height="14" viewBox="0 0 29 14"><path d="M14.6,9.9A3.1,3.1 0 1 0 13.2,5.2" fill="none" stroke="#ababab" stroke-width="1.6"/><path d="M9.5,5.6H13.2V9.6H9.5Z" fill="#b0b0b0"/><path d="M15.5,9L16.5,11" stroke="#aaa" stroke-width="1"/></svg></div><div class="inp" style="left:104.7px;top:363.8px;width:29.6px;height:14.2px">4.0</div><div class="gb" style="left:136.5px;top:363.5px"><svg class="a" style="left:0;top:0" width="29" height="14" viewBox="0 0 29 14"><path d="M13.9,9.9A3.1,3.1 0 1 1 15.3,5.2" fill="none" stroke="#ababab" stroke-width="1.6"/><path d="M15.6,5.4H19.4V9.4H15.6Z" fill="#b0b0b0"/><path d="M13,9L12,11" stroke="#aaa" stroke-width="1"/></svg></div><div class="t" style="left:105.3px;top:387px">Rotation</div><div class="gb" style="left:73.5px;top:397.3px"><svg class="a" style="left:0;top:0" width="29" height="14" viewBox="0 0 29 14"><path d="M14.6,9.9A3.1,3.1 0 1 0 13.2,5.2" fill="none" stroke="#ababab" stroke-width="1.6"/><path d="M9.5,5.6H13.2V9.6H9.5Z" fill="#b0b0b0"/><path d="M15.5,9L16.5,11" stroke="#aaa" stroke-width="1"/></svg></div><div class="gb stopp" style="left:105px;top:397.3px;width:29.5px"><i>Stopp</i></div><div class="gb" style="left:136.5px;top:397.3px"><svg class="a" style="left:0;top:0" width="29" height="14" viewBox="0 0 29 14"><path d="M13.9,9.9A3.1,3.1 0 1 1 15.3,5.2" fill="none" stroke="#ababab" stroke-width="1.6"/><path d="M15.6,5.4H19.4V9.4H15.6Z" fill="#b0b0b0"/><path d="M13,9L12,11" stroke="#aaa" stroke-width="1"/></svg></div><div class="t" style="left:205.2px;top:353.5px">Zahndickenabmaß [µm]</div><div class="t" style="left:296.6px;top:353.1px">Kopfkreisabmaß [µm]</div><div class="t" style="left:178.7px;top:365.7px">Rad 1</div><div class="t" style="left:178.7px;top:381.3px">Rad 2</div><div class="spin" style="left:206.5px;top:363px"><svg width="37.2" height="12.2" viewBox="0 0 37.2 12.2"><path d="M11.8,0.5V11.7M24.7,0.5V11.7" stroke="#e8e8e8" stroke-width="0.9"/><path d="M8.4,3.8L4.6,6.8L8.4,10.2M16.4,6.8H22.9M28.8,3.8L32.7,6.8L28.8,10.2" fill="none" stroke="#ececec" stroke-width="1.3"/><path d="M8.1,3.1L4.1,6.2L8.1,9.5M16.2,5.9H22.7M28.4,3.1L32.4,6.2L28.4,9.5" fill="none" stroke="#b4b4b4" stroke-width="1.5"/></svg></div><div class="inp" style="left:250px;top:364px;width:30.5px;height:12px">-120.0</div><div class="spin" style="left:206.5px;top:379px"><svg width="37.2" height="12.2" viewBox="0 0 37.2 12.2"><path d="M11.8,0.5V11.7M24.7,0.5V11.7" stroke="#e8e8e8" stroke-width="0.9"/><path d="M8.4,3.8L4.6,6.8L8.4,10.2M16.4,6.8H22.9M28.8,3.8L32.7,6.8L28.8,10.2" fill="none" stroke="#ececec" stroke-width="1.3"/><path d="M8.1,3.1L4.1,6.2L8.1,9.5M16.2,5.9H22.7M28.4,3.1L32.4,6.2L28.4,9.5" fill="none" stroke="#b4b4b4" stroke-width="1.5"/></svg></div><div class="inp" style="left:250px;top:379px;width:30.5px;height:12px">-160.0</div><div class="spin" style="left:296.5px;top:363px"><svg width="37.2" height="12.2" viewBox="0 0 37.2 12.2"><path d="M11.8,0.5V11.7M24.7,0.5V11.7" stroke="#e8e8e8" stroke-width="0.9"/><path d="M8.4,3.8L4.6,6.8L8.4,10.2M16.4,6.8H22.9M28.8,3.8L32.7,6.8L28.8,10.2" fill="none" stroke="#ececec" stroke-width="1.3"/><path d="M8.1,3.1L4.1,6.2L8.1,9.5M16.2,5.9H22.7M28.4,3.1L32.4,6.2L28.4,9.5" fill="none" stroke="#b4b4b4" stroke-width="1.5"/></svg></div><div class="inp" style="left:337px;top:364px;width:30.5px;height:12px">0.0</div><div class="spin" style="left:296.5px;top:379px"><svg width="37.2" height="12.2" viewBox="0 0 37.2 12.2"><path d="M11.8,0.5V11.7M24.7,0.5V11.7" stroke="#e8e8e8" stroke-width="0.9"/><path d="M8.4,3.8L4.6,6.8L8.4,10.2M16.4,6.8H22.9M28.8,3.8L32.7,6.8L28.8,10.2" fill="none" stroke="#ececec" stroke-width="1.3"/><path d="M8.1,3.1L4.1,6.2L8.1,9.5M16.2,5.9H22.7M28.4,3.1L32.4,6.2L28.4,9.5" fill="none" stroke="#b4b4b4" stroke-width="1.5"/></svg></div><div class="inp" style="left:337px;top:379px;width:30.5px;height:12px">0.0</div><div class="spin" style="left:296.5px;top:400.5px"><svg width="37.2" height="12.2" viewBox="0 0 37.2 12.2"><path d="M11.8,0.5V11.7M24.7,0.5V11.7" stroke="#e8e8e8" stroke-width="0.9"/><path d="M8.4,3.8L4.6,6.8L8.4,10.2M16.4,6.8H22.9M28.8,3.8L32.7,6.8L28.8,10.2" fill="none" stroke="#ececec" stroke-width="1.3"/><path d="M8.1,3.1L4.1,6.2L8.1,9.5M16.2,5.9H22.7M28.4,3.1L32.4,6.2L28.4,9.5" fill="none" stroke="#b4b4b4" stroke-width="1.5"/></svg></div><div class="inp" style="left:337px;top:401px;width:30.5px;height:12px">0.0</div><div class="t" style="left:181.2px;top:402.3px">Achsabstandsabmaß A<sub>a</sub> [µm]</div><div class="t" style="left:392.7px;top:354.5px">Darstellung der Zahnform</div><div class="cb" style="left:395px;top:369.2px"></div><div class="t dis" style="left:405.9px;top:369px">mit Bearbeitungszugabe</div><div class="cb" style="left:395px;top:384.3px"></div><div class="t dis" style="left:405.9px;top:384px">mit Bearbeitungszugabe</div>
</body></html>
